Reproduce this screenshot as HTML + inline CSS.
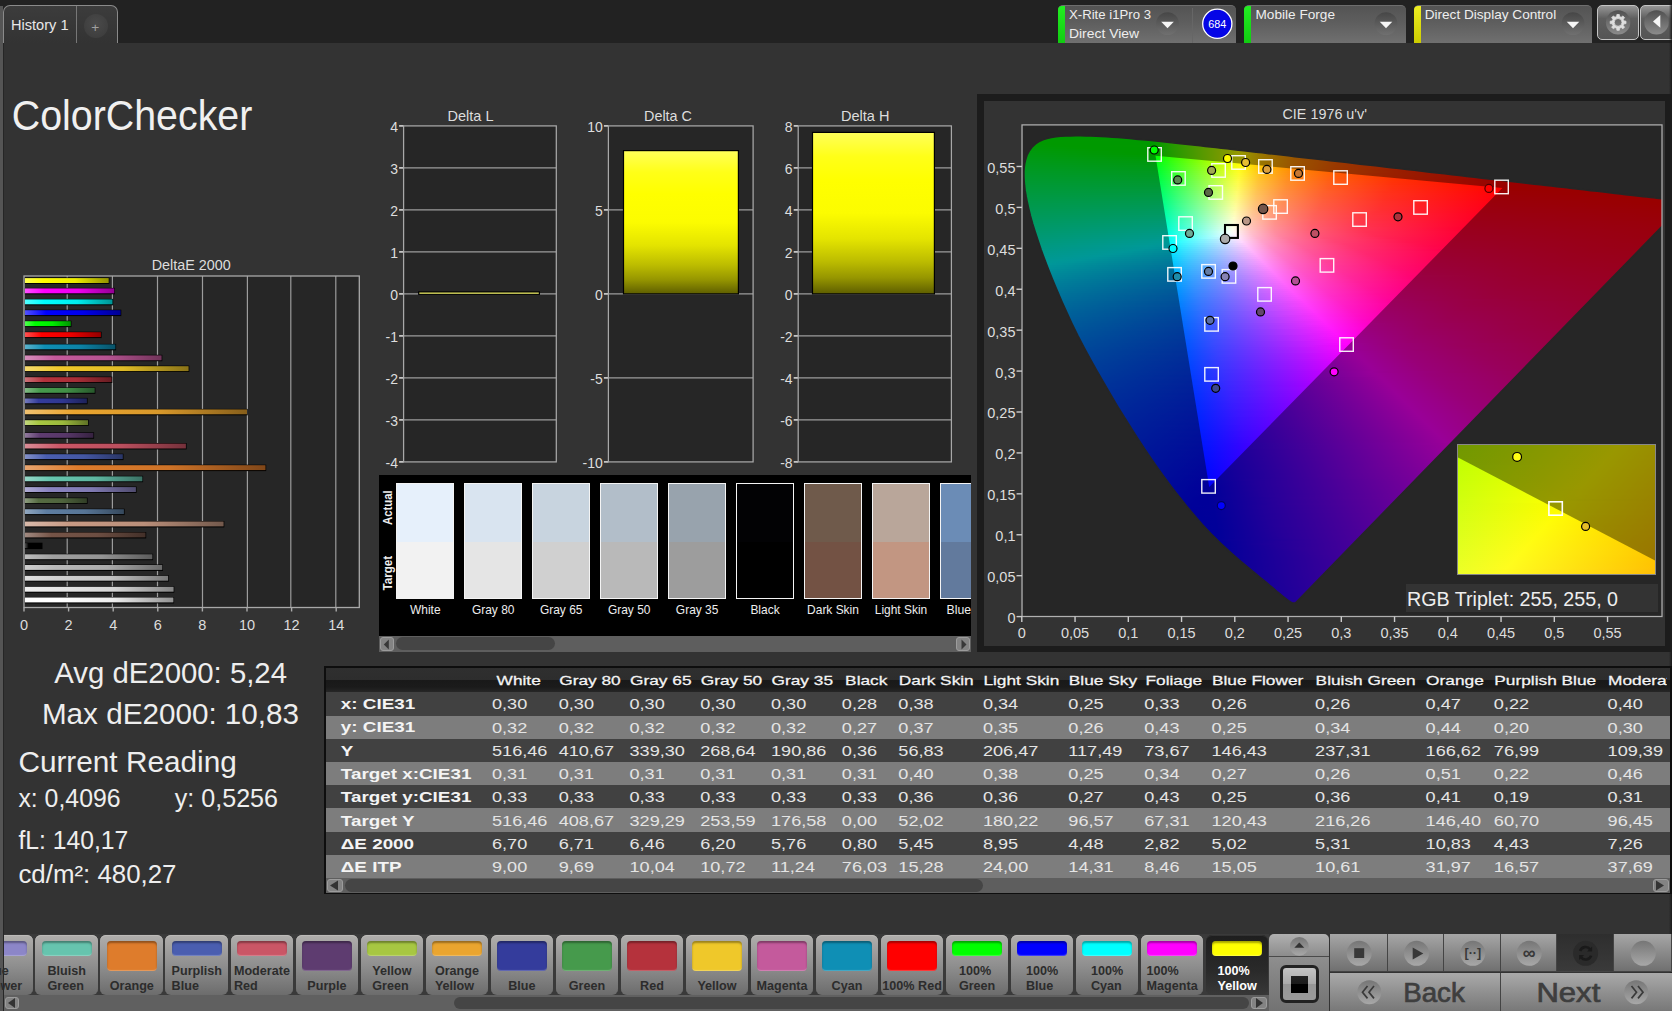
<!DOCTYPE html>
<html><head><meta charset="utf-8"><title>ColorChecker</title>
<style>
html,body{margin:0;padding:0}
body{width:1672px;height:1011px;overflow:hidden;background:#333;position:relative;font-family:'Liberation Sans',sans-serif}
div,i{position:absolute;display:block;box-sizing:border-box}
#ov{position:absolute;left:0;top:0;font-family:'Liberation Sans',sans-serif}
#cie{left:1023px;top:125px;width:639px;height:491px;background:#262626;overflow:hidden}
#loc,#ins{left:0;top:0;width:100%;height:100%}
#loc{clip-path:polygon(272.9px 477.5px,272.7px 477.5px,272.5px 477.8px,272.1px 477.8px,271.7px 478.1px,271.2px 478.1px,270.5px 478.1px,269.6px 478.1px,268.0px 477.3px,265.2px 475.4px,264.1px 474.6px,262.9px 473.7px,261.5px 472.6px,259.9px 471.3px,258.1px 469.8px,256.1px 468.2px,254.0px 466.5px,251.8px 464.5px,249.3px 462.4px,246.7px 460.3px,243.9px 457.9px,240.8px 455.3px,237.3px 452.5px,233.5px 449.4px,229.5px 446.1px,225.3px 442.6px,220.8px 438.9px,216.0px 434.8px,212.9px 432.1px,209.7px 429.3px,206.4px 426.4px,202.9px 423.2px,199.3px 419.8px,195.6px 416.3px,191.9px 412.6px,188.0px 408.7px,183.8px 404.4px,179.3px 399.5px,174.5px 394.0px,169.4px 388.1px,164.1px 381.7px,158.6px 374.8px,152.8px 367.5px,146.9px 359.7px,140.8px 351.4px,134.5px 342.6px,128.1px 333.4px,121.5px 323.8px,114.9px 313.7px,108.1px 303.0px,101.2px 292.0px,94.3px 280.8px,87.6px 269.4px,80.9px 257.9px,74.1px 246.1px,67.4px 234.2px,61.0px 222.3px,54.9px 210.6px,49.2px 199.0px,43.8px 187.4px,38.7px 176.0px,33.9px 164.8px,29.4px 154.1px,25.3px 143.9px,21.5px 133.9px,18.0px 124.3px,14.9px 115.1px,12.1px 106.5px,9.6px 98.5px,7.5px 91.0px,5.8px 83.9px,4.3px 77.3px,3.1px 71.2px,2.1px 65.4px,1.5px 60.2px,1.1px 55.3px,0.9px 50.8px,0.9px 46.5px,1.2px 42.5px,1.7px 38.9px,2.4px 35.6px,3.3px 32.5px,4.3px 29.6px,6.6px 25.4px,9.3px 21.8px,12.5px 18.9px,16.0px 16.5px,19.9px 14.7px,24.0px 13.4px,28.4px 12.4px,33.0px 11.8px,37.7px 11.3px,42.6px 11.0px,47.7px 10.9px,52.7px 10.8px,57.7px 10.8px,62.8px 10.9px,67.9px 11.0px,73.1px 11.2px,78.4px 11.5px,83.8px 11.8px,89.3px 12.1px,95.0px 12.5px,100.9px 13.0px,106.9px 13.5px,113.0px 14.1px,119.4px 14.7px,126.0px 15.3px,132.8px 16.0px,139.8px 16.7px,144.2px 17.2px,148.6px 17.7px,153.1px 18.1px,157.7px 18.6px,162.5px 19.2px,167.3px 19.7px,172.2px 20.2px,177.2px 20.8px,182.3px 21.4px,187.5px 22.0px,192.8px 22.5px,198.2px 23.2px,203.8px 23.8px,209.4px 24.4px,215.2px 25.1px,221.0px 25.7px,227.0px 26.4px,233.1px 27.1px,239.3px 27.8px,245.6px 28.6px,252.0px 29.3px,258.6px 30.0px,265.2px 30.8px,271.9px 31.6px,278.8px 32.4px,285.8px 33.2px,292.8px 34.0px,300.0px 34.8px,307.3px 35.7px,314.6px 36.5px,322.0px 37.3px,329.5px 38.2px,337.2px 39.1px,344.8px 40.0px,352.5px 40.8px,360.2px 41.7px,368.0px 42.6px,375.9px 43.5px,383.7px 44.4px,391.4px 45.3px,399.0px 46.2px,406.6px 47.1px,414.1px 47.9px,421.6px 48.8px,429.1px 49.7px,436.6px 50.5px,444.0px 51.4px,451.4px 52.2px,458.7px 53.1px,465.8px 53.9px,472.7px 54.7px,479.5px 55.4px,486.2px 56.2px,492.7px 56.9px,499.1px 57.7px,505.3px 58.4px,511.3px 59.1px,517.2px 59.7px,522.9px 60.4px,528.5px 61.0px,533.8px 61.7px,539.0px 62.3px,544.0px 62.8px,548.8px 63.4px,553.5px 63.9px,560.9px 64.8px,567.8px 65.6px,574.4px 66.3px,580.6px 67.0px,586.5px 67.7px,592.1px 68.4px,597.4px 69.0px,602.5px 69.6px,607.4px 70.1px,612.0px 70.6px,616.3px 71.1px,620.3px 71.6px,624.1px 72.0px,627.6px 72.4px,630.8px 72.8px,633.8px 73.1px,636.4px 73.4px,638.9px 73.7px,641.2px 74.0px,643.3px 74.2px,645.3px 74.5px,647.0px 74.7px,648.6px 74.8px,650.0px 75.0px,653.1px 75.4px,655.6px 75.6px,657.6px 75.9px,659.6px 76.1px,661.3px 76.3px,662.5px 76.4px,663.0px 76.5px,663.3px 76.5px)}
#loc i,#ins i{position:absolute;display:block}
</style></head>
<body>
<div style="left:0;top:0;width:1672px;height:43px;background:#222"></div>
<div style="left:0;top:6px;width:3px;height:1005px;background:#555"></div>
<div style="left:3px;top:43px;width:1px;height:968px;background:#262626"></div>
<div style="left:3px;top:5px;width:115px;height:38px;border:1px solid #8a8a8a;border-bottom:none;border-radius:7px 7px 0 0;background:linear-gradient(#3c3c3c,#333)"></div>
<div style="left:76px;top:6px;width:1px;height:37px;background:#777"></div>
<div style="left:84px;top:14px;width:24px;height:24px;border-radius:12px;background:radial-gradient(circle at 50% 40%,#4a4a4a,#3a3a3a)"></div>
<div style="left:1058px;top:5px;width:178px;height:38px;border-radius:5px 5px 0 0;background:linear-gradient(#545454,#5e5e5e 45%,#707070);border-top:1px solid #6e6e6e"></div>
<div style="left:1058px;top:6px;width:7px;height:37px;border-radius:4px 0 0 0;background:linear-gradient(#2e2,#1c1)"></div>
<div style="left:1192px;top:8px;width:1px;height:35px;background:#666"></div>
<div style="left:1244px;top:5px;width:162px;height:38px;border-radius:5px 5px 0 0;background:linear-gradient(#545454,#5e5e5e 45%,#707070);border-top:1px solid #6e6e6e"></div>
<div style="left:1244px;top:6px;width:7px;height:37px;border-radius:4px 0 0 0;background:linear-gradient(#2e2,#1c1)"></div>
<div style="left:1414px;top:5px;width:178px;height:38px;border-radius:5px 5px 0 0;background:linear-gradient(#545454,#5e5e5e 45%,#707070);border-top:1px solid #6e6e6e"></div>
<div style="left:1414px;top:6px;width:7px;height:37px;border-radius:4px 0 0 0;background:linear-gradient(#ee2,#cc0)"></div>
<div style="left:1597px;top:4.7px;width:42.3px;height:35.3px;border-radius:5px;border:1px solid #c4c4c4;background:linear-gradient(#969696,#5e5e5e 38%,#545454)"></div>
<div style="left:1640px;top:4.7px;width:42px;height:35.3px;border-radius:5px;border:1px solid #c4c4c4;background:linear-gradient(#969696,#5e5e5e 38%,#545454)"></div>
<div style="left:1669px;top:0;width:3px;height:1011px;background:linear-gradient(90deg,rgba(20,20,20,0),rgba(20,20,20,.85))"></div>
<div style="left:379px;top:475px;width:592px;height:162px;background:#000"></div>
<div style="left:396.3px;top:482.5px;width:58.0px;height:116.5px;border:1px solid #f4f4f4;background:linear-gradient(#e6f0fb 50.5%,#f2f2f2 50.5%)"></div>
<div style="left:464.2px;top:482.5px;width:58.0px;height:116.5px;border:1px solid #f4f4f4;background:linear-gradient(#d9e4f0 50.5%,#e5e5e5 50.5%)"></div>
<div style="left:532.2px;top:482.5px;width:58.0px;height:116.5px;border:1px solid #f4f4f4;background:linear-gradient(#c8d4df 50.5%,#d0d0d0 50.5%)"></div>
<div style="left:600.2px;top:482.5px;width:58.0px;height:116.5px;border:1px solid #f4f4f4;background:linear-gradient(#b2bec9 50.5%,#b9b9b9 50.5%)"></div>
<div style="left:668.1px;top:482.5px;width:58.0px;height:116.5px;border:1px solid #f4f4f4;background:linear-gradient(#98a3ad 50.5%,#9d9d9d 50.5%)"></div>
<div style="left:736.0px;top:482.5px;width:58.0px;height:116.5px;border:1px solid #f4f4f4;background:linear-gradient(#020204 50.5%,#000000 50.5%)"></div>
<div style="left:804.0px;top:482.5px;width:58.0px;height:116.5px;border:1px solid #f4f4f4;background:linear-gradient(#6f5a4b 50.5%,#735244 50.5%)"></div>
<div style="left:872.0px;top:482.5px;width:58.0px;height:116.5px;border:1px solid #f4f4f4;background:linear-gradient(#b9a69a 50.5%,#c29682 50.5%)"></div>
<div style="left:939.9px;top:482.5px;width:31.1px;height:116.5px;border:1px solid #f4f4f4;border-right:none;background:linear-gradient(#6b8cb6 50.5%,#627a9d 50.5%)"></div>
<div style="left:379px;top:636px;width:592px;height:15.6px;background:#5e5e5e"></div>
<div style="left:379.5px;top:636.5px;width:14.3px;height:14.6px;background:#838383;border:1px solid #9c9c9c;border-radius:3px"></div>
<div style="left:956px;top:636.5px;width:14.3px;height:14.6px;background:#838383;border:1px solid #9c9c9c;border-radius:3px"></div>
<div style="left:396.4px;top:637.3px;width:158.3px;height:12.8px;background:#454545;border-radius:7px"></div>
<div style="left:977px;top:94px;width:695px;height:558px;border:7px solid #1c1c1c;border-bottom-width:6px;background:#333"></div>
<div id="cie"><div id="loc">
<i style="left:29px;top:10px;width:61px;height:2px;background:linear-gradient(90deg,#00ff00 0,#00ff00 61px)"></i>
<i style="left:20px;top:12px;width:95px;height:2px;background:linear-gradient(90deg,#00ff00 0,#00ff00 95px)"></i>
<i style="left:15px;top:14px;width:120px;height:2px;background:linear-gradient(90deg,#00ff00 0,#03ff00 115px,#15ff00 120px)"></i>
<i style="left:11px;top:16px;width:143px;height:2px;background:linear-gradient(90deg,#00ff00 0,#01ff00 119px,#3cff00 138px,#4aff00 143px)"></i>
<i style="left:9px;top:18px;width:164px;height:2px;background:linear-gradient(90deg,#00ff00 0,#00ff00 121px,#39ff00 139px,#7dff00 164px)"></i>
<i style="left:7px;top:20px;width:183px;height:2px;background:linear-gradient(90deg,#00ff07 0,#00ff00 40px,#03ff00 124px,#49ff00 147px,#acff00 183px)"></i>
<i style="left:5px;top:22px;width:203px;height:2px;background:linear-gradient(90deg,#00ff0c 0,#00ff00 59px,#01ff00 126px,#3dff00 145px,#e1ff00 203px)"></i>
<i style="left:4px;top:24px;width:222px;height:2px;background:linear-gradient(90deg,#00ff11 0,#00ff00 81px,#00ff00 127px,#37ff00 144px,#f1ff00 209px,#fffd00 214px,#ffe600 222px)"></i>
<i style="left:3px;top:26px;width:240px;height:2px;background:linear-gradient(90deg,#00ff16 0,#00ff00 104px,#00ff00 128px,#47ff00 151px,#f5ff00 211px,#fffc00 215px,#ffc400 237px,#ffbe00 240px)"></i>
<i style="left:2px;top:28px;width:259px;height:2px;background:linear-gradient(90deg,#00ff1b 0,#00ff01 110px,#02ff00 130px,#3eff00 149px,#f2ff00 211px,#fffc00 216px,#ffc300 238px,#ff9e00 259px)"></i>
<i style="left:1px;top:30px;width:277px;height:2px;background:linear-gradient(90deg,#00ff1f 0,#00ff04 125px,#00ff02 131px,#35ff00 147px,#f0ff00 211px,#fffb00 217px,#ffc300 239px,#ff8e00 270px,#ff8500 277px)"></i>
<i style="left:0px;top:32px;width:295px;height:2px;background:linear-gradient(90deg,#00ff23 0,#00ff0a 132px,#46ff02 154px,#f3ff00 213px,#fffb00 218px,#ffc200 240px,#ff8e00 271px,#ff7200 295px)"></i>
<i style="left:0px;top:34px;width:313px;height:2px;background:linear-gradient(90deg,#00ff27 0,#02ff10 133px,#3fff0b 152px,#a7ff00 188px,#fffd00 217px,#ffc300 239px,#ff8e00 270px,#ff6000 313px)"></i>
<i style="left:0px;top:36px;width:330px;height:2px;background:linear-gradient(90deg,#00ff2b 0,#00ff16 133px,#36ff12 149px,#e8ff00 209px,#fffd00 217px,#ffc300 239px,#ff8e00 270px,#ff5e00 315px,#ff5200 330px)"></i>
<i style="left:0px;top:38px;width:348px;height:2px;background:linear-gradient(90deg,#00ff2f 0,#00ff1c 133px,#44ff18 154px,#f2ff05 212px,#fffc03 217px,#ffc200 239px,#ff8d00 270px,#ff5d00 315px,#ff4500 348px)"></i>
<i style="left:0px;top:40px;width:365px;height:2px;background:linear-gradient(90deg,#00ff33 0,#02ff22 134px,#41ff1e 153px,#f2ff0e 212px,#fffb0c 217px,#ffc302 238px,#ff8f00 268px,#ff5f00 312px,#ff3a00 365px)"></i>
<i style="left:0px;top:42px;width:382px;height:2px;background:linear-gradient(90deg,#00ff37 0,#00ff28 134px,#34ff25 149px,#efff17 211px,#fffb15 217px,#ffc30a 238px,#ff8e00 268px,#ff5e00 312px,#ff3100 381px,#ff3000 382px)"></i>
<i style="left:0px;top:44px;width:400px;height:2px;background:linear-gradient(90deg,#00ff3b 0,#00ff2d 134px,#45ff2a 155px,#f3ff1e 212px,#fffd1d 216px,#ffc412 237px,#ff8f06 267px,#ff6700 301px,#ff3a00 363px,#ff2700 400px)"></i>
<i style="left:0px;top:46px;width:417px;height:2px;background:linear-gradient(90deg,#00ff3f 0,#02ff33 135px,#42ff30 154px,#f4ff26 212px,#fffd24 216px,#ffc318 237px,#ff8e0c 267px,#ff5e00 311px,#ff3100 379px,#ff1f00 417px)"></i>
<i style="left:0px;top:48px;width:435px;height:2px;background:linear-gradient(90deg,#00ff43 0,#00ff38 135px,#32ff37 149px,#f1ff2d 211px,#fffc2c 216px,#ffc31e 237px,#ff8f12 266px,#ff5f05 309px,#ff3e00 353px,#ff1700 435px)"></i>
<i style="left:0px;top:50px;width:452px;height:2px;background:linear-gradient(90deg,#00ff47 0,#00ff3e 135px,#44ff3c 155px,#f2ff34 211px,#fffb33 216px,#ffc224 237px,#ff8e17 266px,#ff5e0a 309px,#ff3600 367px,#ff1000 452px)"></i>
<i style="left:0px;top:52px;width:469px;height:2px;background:linear-gradient(90deg,#00ff4b 0,#02ff43 136px,#43ff41 155px,#f2ff3b 211px,#fffb3a 216px,#ffc12a 237px,#ff8e1c 266px,#ff5d0e 309px,#ff3000 376px,#ff0900 469px)"></i>
<i style="left:0px;top:54px;width:487px;height:2px;background:linear-gradient(90deg,#00ff4e 0,#00ff48 136px,#36ff47 151px,#efff42 210px,#fffd41 215px,#ffc531 235px,#ff9122 263px,#ff6013 305px,#ff3305 370px,#ff1600 432px,#ff0000 487px)"></i>
<i style="left:0px;top:56px;width:505px;height:2px;background:linear-gradient(90deg,#00ff52 0,#00ff4e 136px,#42ff4d 155px,#f3ff49 211px,#fffd48 215px,#ffc437 235px,#ff9027 263px,#ff6017 305px,#ff3208 370px,#ff1300 439px,#ff0000 493px,#ff0000 505px)"></i>
<i style="left:0px;top:58px;width:522px;height:2px;background:linear-gradient(90deg,#00ff56 0,#02ff53 137px,#44ff52 156px,#f4ff50 211px,#fffc4f 215px,#ffc43c 235px,#ff902b 263px,#ff5f1b 305px,#ff310b 370px,#ff0b00 458px,#ff0000 492px,#ff0000 522px)"></i>
<i style="left:0px;top:60px;width:539px;height:2px;background:linear-gradient(90deg,#00ff5a 0,#01ff58 137px,#37ff58 152px,#f1ff57 210px,#fffb55 215px,#ffc342 235px,#ff8f30 263px,#ff5e1f 305px,#ff310f 370px,#ff0100 479px,#ff0000 539px)"></i>
<i style="left:0px;top:62px;width:557px;height:2px;background:linear-gradient(90deg,#00ff5e 0,#00ff5e 137px,#40ff5e 155px,#f2ff5e 210px,#fffb5c 215px,#ffc247 235px,#ff8e34 263px,#ff5d22 305px,#ff3012 370px,#ff0000 486px,#ff0000 557px)"></i>
<i style="left:0px;top:64px;width:574px;height:2px;background:linear-gradient(90deg,#00ff62 0,#03ff63 138px,#45ff63 157px,#f2ff64 210px,#fffa63 215px,#ffc14d 235px,#ff8d39 263px,#ff5e26 304px,#ff3015 369px,#ff0002 484px,#ff0000 574px)"></i>
<i style="left:0px;top:66px;width:592px;height:2px;background:linear-gradient(90deg,#00ff65 0,#01ff68 138px,#38ff69 153px,#f3ff6b 210px,#fffd6b 214px,#ffc554 233px,#ff913f 260px,#ff612b 300px,#ff3319 362px,#ff0006 480px,#ff0000 567px,#ff0000 592px)"></i>
<i style="left:0px;top:68px;width:609px;height:2px;background:linear-gradient(90deg,#00ff69 0,#00ff6e 138px,#41ff6f 156px,#f3ff72 210px,#fffc71 214px,#ffc459 233px,#ff9043 260px,#ff602f 300px,#ff331c 362px,#ff0008 479px,#ff0000 578px,#ff0000 609px)"></i>
<i style="left:0px;top:70px;width:626px;height:2px;background:linear-gradient(90deg,#00ff6d 0,#03ff73 139px,#47ff75 158px,#f4ff79 210px,#fffc78 214px,#ffc45f 233px,#ff9048 260px,#ff5f32 300px,#ff321f 362px,#ff000b 477px,#ff0000 597px,#ff0000 626px)"></i>
<i style="left:1px;top:72px;width:638px;height:2px;background:linear-gradient(90deg,#00ff71 0,#01ff79 138px,#39ff7a 153px,#f1ff80 208px,#fffb7e 213px,#ffc364 232px,#ff8f4c 259px,#ff5e36 299px,#ff3121 361px,#ff000d 475px,#ff0000 616px,#ff0000 638px)"></i>
<i style="left:1px;top:74px;width:638px;height:2px;background:linear-gradient(90deg,#00ff75 0,#00ff7e 138px,#3fff80 155px,#f1ff86 208px,#fffa85 213px,#ffc269 232px,#ff8e50 259px,#ff5e39 299px,#ff3024 361px,#ff000f 473px,#ff0000 637px,#ff0000 638px)"></i>
<i style="left:2px;top:76px;width:637px;height:2px;background:linear-gradient(90deg,#00ff79 0,#00ff84 137px,#52ff86 160px,#f6ff8e 208px,#fff98b 212px,#ffc16f 231px,#ff8d55 258px,#ff5d3c 298px,#ff3027 360px,#ff0012 470px,#ff0000 637px)"></i>
<i style="left:2px;top:78px;width:637px;height:2px;background:linear-gradient(90deg,#00ff7d 0,#01ff89 138px,#3aff8b 153px,#f3ff94 207px,#fffc94 211px,#ffc375 230px,#ff8e5a 257px,#ff5e41 296px,#ff312a 357px,#ff0014 468px,#ff0001 637px)"></i>
<i style="left:2px;top:80px;width:637px;height:2px;background:linear-gradient(90deg,#00ff80 0,#00ff8f 138px,#3dff91 154px,#f3ff9b 207px,#fffc9a 211px,#ffc27b 230px,#ff8d5e 257px,#ff5d44 296px,#ff302d 357px,#ff0016 466px,#ff0003 637px)"></i>
<i style="left:3px;top:82px;width:636px;height:2px;background:linear-gradient(90deg,#00ff84 0,#00ff94 137px,#50ff98 159px,#f8ffa3 207px,#fffba1 210px,#ffc180 229px,#ff8e63 255px,#ff5d48 294px,#ff3030 355px,#ff0019 463px,#ff0005 636px)"></i>
<i style="left:3px;top:84px;width:636px;height:2px;background:linear-gradient(90deg,#00ff88 0,#01ff9a 138px,#3bff9d 153px,#f1ffa9 205px,#fffaa7 210px,#ffc085 229px,#ff8d67 255px,#ff5d4b 294px,#ff2f32 355px,#ff001b 461px,#ff0007 636px)"></i>
<i style="left:4px;top:86px;width:635px;height:2px;background:linear-gradient(90deg,#00ff8c 0,#00ffa0 137px,#3bffa3 152px,#f1ffb0 204px,#fffdb0 208px,#ffc58e 226px,#ff8f6e 252px,#ff5f51 290px,#ff3136 349px,#ff001d 457px,#ff0008 635px)"></i>
<i style="left:4px;top:88px;width:635px;height:2px;background:linear-gradient(90deg,#00ff90 0,#00ffa5 137px,#4fffaa 158px,#f6ffb8 205px,#fffdb7 208px,#ffc493 226px,#ff9073 251px,#ff6055 288px,#ff323a 346px,#ff0020 455px,#ff000a 635px)"></i>
<i style="left:5px;top:90px;width:634px;height:2px;background:linear-gradient(90deg,#00ff94 0,#02ffab 137px,#3dffaf 152px,#f3ffbf 203px,#fffcbe 207px,#ffc399 225px,#ff8f77 250px,#ff5f59 287px,#ff323d 345px,#ff0022 452px,#ff000b 634px)"></i>
<i style="left:5px;top:92px;width:634px;height:2px;background:linear-gradient(90deg,#00ff98 0,#00ffb1 137px,#38ffb5 151px,#efffc6 202px,#ffffc7 206px,#ffc5a0 224px,#ff907d 249px,#ff5f5d 286px,#ff3240 343px,#ff0024 450px,#ff000d 634px)"></i>
<i style="left:6px;top:94px;width:633px;height:2px;background:linear-gradient(90deg,#00ff9c 0,#00ffb7 136px,#50ffbd 157px,#f8ffce 203px,#fffacb 206px,#ffc1a4 224px,#ff8e80 249px,#ff5e5f 286px,#ff3042 344px,#ff0026 448px,#ff000e 633px)"></i>
<i style="left:6px;top:96px;width:633px;height:2px;background:linear-gradient(90deg,#00ffa0 0,#02ffbd 137px,#3effc1 152px,#f1ffd4 201px,#fffdd5 205px,#ffc6ad 222px,#ff9288 246px,#ff6166 282px,#ff3447 337px,#ff0029 444px,#ff0010 633px)"></i>
<i style="left:7px;top:98px;width:632px;height:2px;background:linear-gradient(90deg,#00ffa5 0,#00ffc3 136px,#3affc7 150px,#f1ffdc 200px,#fffddc 204px,#ffc5b2 221px,#ff918c 245px,#ff6069 281px,#ff324a 337px,#ff002b 442px,#ff0011 632px)"></i>
<i style="left:8px;top:100px;width:631px;height:2px;background:linear-gradient(90deg,#00ffa9 0,#00ffc8 135px,#4fffd0 155px,#f6ffe4 200px,#fffce3 203px,#ffc4b8 220px,#ff9091 244px,#ff5f6d 280px,#ff324c 336px,#ff002d 439px,#ff0013 631px)"></i>
<i style="left:8px;top:102px;width:631px;height:2px;background:linear-gradient(90deg,#00ffad 0,#00ffce 135px,#6bffd9 163px,#ffffed 202px,#ffc6c0 219px,#ff9197 243px,#ff6172 278px,#ff3451 332px,#ff0030 434px,#ff0014 631px)"></i>
<i style="left:9px;top:104px;width:630px;height:2px;background:linear-gradient(90deg,#00ffb1 0,#00ffd3 131px,#00ffd5 135px,#37ffda 148px,#effff2 197px,#fffef4 201px,#ffc5c5 218px,#ff909b 242px,#ff6075 277px,#ff3353 331px,#ff0033 431px,#ff0016 624px,#ff0015 630px)"></i>
<i style="left:9px;top:106px;width:628px;height:2px;background:linear-gradient(90deg,#00ffb5 0,#00ffd8 129px,#00ffdb 135px,#4dffe3 154px,#f4fffa 198px,#fffaf7 202px,#ffc1c9 219px,#ff8d9e 243px,#ff5d77 279px,#ff2f54 335px,#ff0034 433px,#ff0017 624px,#ff0017 628px)"></i>
<i style="left:10px;top:108px;width:625px;height:2px;background:linear-gradient(90deg,#00ffba 0,#00ffde 126px,#02ffe1 135px,#41ffe8 150px,#f2fcff 197px,#fff5fb 202px,#ffbecc 219px,#ff89a0 244px,#ff5978 281px,#ff2c54 339px,#ff0036 430px,#ff0019 616px,#ff0018 625px)"></i>
<i style="left:11px;top:110px;width:622px;height:2px;background:linear-gradient(90deg,#00ffbe 0,#00ffe3 123px,#00ffe7 134px,#35ffed 146px,#c2fcff 184px,#fff0ff 202px,#ffb8cd 220px,#ff85a1 245px,#ff5579 283px,#ff2854 343px,#ff0039 427px,#ff001b 608px,#ff001a 622px)"></i>
<i style="left:11px;top:112px;width:620px;height:2px;background:linear-gradient(90deg,#00ffc2 0,#00ffe7 120px,#00ffee 134px,#4bfff7 152px,#9bfbff 174px,#ffe8ff 204px,#ffafcc 223px,#ff7c9f 250px,#ff4d76 290px,#ff2052 355px,#ff003b 425px,#ff001d 601px,#ff001b 620px)"></i>
<i style="left:12px;top:114px;width:617px;height:2px;background:linear-gradient(90deg,#00ffc7 0,#00ffed 117px,#02fff4 134px,#42fffc 149px,#e9e4ff 198px,#ffdcfb 206px,#ffa5c9 226px,#ff739b 255px,#ff4573 298px,#ff184e 369px,#ff003d 422px,#ff0020 593px,#ff001d 617px)"></i>
<i style="left:13px;top:116px;width:614px;height:2px;background:linear-gradient(90deg,#00ffcb 0,#00fff2 115px,#00fffb 133px,#32fdff 144px,#c6e4ff 188px,#ffd8ff 206px,#ffa2cc 226px,#ff709e 255px,#ff4274 299px,#ff154f 371px,#ff0040 419px,#ff0022 586px,#ff001e 614px)"></i>
<i style="left:13px;top:118px;width:612px;height:2px;background:linear-gradient(90deg,#00ffd0 0,#00fff7 113px,#00fdff 133px,#3bf5ff 147px,#e6d6ff 200px,#ffcdfc 209px,#ff99c9 230px,#ff689a 261px,#ff3a71 308px,#ff0e4c 385px,#ff0042 418px,#ff0024 581px,#ff0020 612px)"></i>
<i style="left:14px;top:120px;width:609px;height:2px;background:linear-gradient(90deg,#00ffd4 0,#00fffc 110px,#03f6ff 133px,#38efff 146px,#ded1ff 198px,#ffc6fc 210px,#ff92c8 232px,#ff629a 264px,#ff3570 313px,#ff084b 393px,#ff0044 416px,#ff0025 576px,#ff0021 609px)"></i>
<i style="left:15px;top:122px;width:607px;height:2px;background:linear-gradient(90deg,#00ffd9 0,#00fcff 109px,#00f0ff 132px,#2feaff 143px,#bed0ff 188px,#ffbffc 211px,#ff8dc9 233px,#ff5f9b 265px,#ff3371 314px,#ff074d 394px,#ff0046 415px,#ff0027 573px,#ff0023 607px)"></i>
<i style="left:15px;top:124px;width:605px;height:2px;background:linear-gradient(90deg,#00ffdd 0,#00fcff 97px,#00eaff 132px,#3be2ff 147px,#e8c1ff 204px,#ffb9fc 213px,#ff87c8 236px,#ff599a 269px,#ff2e70 320px,#ff004c 403px,#ff002c 549px,#ff0024 605px)"></i>
<i style="left:16px;top:126px;width:602px;height:2px;background:linear-gradient(90deg,#00ffe2 0,#00fcff 84px,#03e4ff 132px,#39ddff 146px,#e0bcff 202px,#ffb3fc 214px,#ff82c9 237px,#ff559a 271px,#ff2a71 323px,#ff004c 406px,#ff002c 553px,#ff0026 602px)"></i>
<i style="left:17px;top:128px;width:599px;height:2px;background:linear-gradient(90deg,#00ffe7 0,#00fcff 72px,#00dfff 131px,#30d9ff 143px,#c2bdff 192px,#ffadfc 215px,#ff7cc8 239px,#ff5099 274px,#ff2670 327px,#ff004f 403px,#ff002f 546px,#ff0027 599px)"></i>
<i style="left:18px;top:130px;width:596px;height:2px;background:linear-gradient(90deg,#00ffeb 0,#00fcff 59px,#00daff 130px,#38d2ff 145px,#dcb1ff 202px,#ffa7fc 216px,#ff78c9 240px,#ff4d9b 275px,#ff2471 329px,#ff0051 400px,#ff0031 540px,#ff0029 596px)"></i>
<i style="left:18px;top:132px;width:594px;height:2px;background:linear-gradient(90deg,#00fff0 0,#00fbff 48px,#03d4ff 131px,#39cdff 146px,#e2aaff 206px,#ffa1fc 218px,#ff73c8 243px,#ff489a 279px,#ff2071 334px,#ff0054 398px,#ff0033 535px,#ff002a 594px)"></i>
<i style="left:19px;top:134px;width:591px;height:2px;background:linear-gradient(90deg,#00fff5 0,#00fbff 36px,#01d0ff 130px,#31c9ff 143px,#c5abff 196px,#ff9bfc 219px,#ff6fc9 244px,#ff459a 281px,#ff1d71 337px,#ff0057 395px,#ff0035 528px,#ff002c 591px)"></i>
<i style="left:20px;top:136px;width:588px;height:2px;background:linear-gradient(90deg,#00fffa 0,#00f8ff 30px,#00cbff 129px,#38c3ff 145px,#dda0ff 206px,#ff96fd 220px,#ff6ac8 246px,#ff4099 284px,#ff1970 342px,#ff0059 393px,#ff0037 524px,#ff002d 588px)"></i>
<i style="left:21px;top:138px;width:585px;height:2px;background:linear-gradient(90deg,#00ffff 0,#03c6ff 129px,#3abeff 145px,#e39aff 209px,#ff91fd 221px,#ff66c9 247px,#ff3e9b 285px,#ff1771 343px,#ff005c 390px,#ff003a 518px,#ff002f 585px)"></i>
<i style="left:21px;top:140px;width:583px;height:2px;background:linear-gradient(90deg,#00faff 0,#01c2ff 129px,#32bbff 143px,#c89bff 200px,#ff8cfd 223px,#ff61c8 250px,#ff399a 289px,#ff1270 349px,#ff005e 388px,#ff003c 513px,#ff0030 583px)"></i>
<i style="left:22px;top:142px;width:580px;height:2px;background:linear-gradient(90deg,#00f6ff 0,#00beff 128px,#36b6ff 144px,#d593ff 206px,#ff87fd 224px,#ff5dc9 251px,#ff379b 290px,#ff1071 350px,#ff0061 385px,#ff003f 507px,#ff0032 580px)"></i>
<i style="left:23px;top:144px;width:577px;height:2px;background:linear-gradient(90deg,#00f1ff 0,#03b9ff 128px,#3ab1ff 145px,#e48bff 213px,#ff82fd 225px,#ff59c8 253px,#ff339a 293px,#ff0c70 355px,#ff0064 382px,#ff0041 501px,#ff0033 577px)"></i>
<i style="left:24px;top:146px;width:574px;height:2px;background:linear-gradient(90deg,#00ecff 0,#01b5ff 127px,#33aeff 142px,#cb8cff 203px,#ff7dfd 226px,#ff55c9 254px,#ff309a 295px,#ff0971 358px,#ff0066 380px,#ff0043 497px,#ff0035 574px)"></i>
<i style="left:24px;top:148px;width:572px;height:2px;background:linear-gradient(90deg,#00e8ff 0,#00b1ff 127px,#34aaff 143px,#ce87ff 206px,#ff79fd 228px,#ff52ca 256px,#ff2d9c 297px,#ff0772 360px,#ff0069 379px,#ff0045 494px,#ff0037 572px)"></i>
<i style="left:25px;top:150px;width:569px;height:2px;background:linear-gradient(90deg,#00e4ff 0,#03adff 127px,#3aa4ff 145px,#e37dff 216px,#ff74fd 229px,#ff4ec9 258px,#ff299b 300px,#ff0371 364px,#ff004d 468px,#ff0038 569px)"></i>
<i style="left:26px;top:152px;width:566px;height:2px;background:linear-gradient(90deg,#00e0ff 0,#01aaff 126px,#33a2ff 142px,#cd7fff 207px,#ff70fd 230px,#ff4bca 259px,#ff269b 302px,#ff0071 367px,#ff004d 473px,#ff003a 566px)"></i>
<i style="left:27px;top:154px;width:563px;height:2px;background:linear-gradient(90deg,#00dbff 0,#00a6ff 125px,#349eff 142px,#d07aff 209px,#ff6cfd 231px,#ff47c9 261px,#ff239a 305px,#ff0073 367px,#ff004e 472px,#ff003b 563px)"></i>
<i style="left:28px;top:156px;width:560px;height:2px;background:linear-gradient(90deg,#00d7ff 0,#03a2ff 125px,#3a99ff 144px,#e570ff 219px,#ff68fd 232px,#ff44ca 262px,#ff209b 306px,#ff0076 364px,#ff0051 467px,#ff003d 560px)"></i>
<i style="left:29px;top:158px;width:557px;height:2px;background:linear-gradient(90deg,#00d3ff 0,#019fff 124px,#3497ff 141px,#cd73ff 209px,#ff64fd 233px,#ff40c9 264px,#ff1d9b 309px,#ff0079 361px,#ff0053 462px,#ff003e 557px)"></i>
<i style="left:29px;top:160px;width:556px;height:2px;background:linear-gradient(90deg,#00d0ff 0,#009cff 124px,#3294ff 141px,#ca70ff 209px,#ff60fd 235px,#ff3dca 266px,#ff1a9b 312px,#ff007c 359px,#ff0056 457px,#ff0040 556px)"></i>
<i style="left:30px;top:162px;width:553px;height:2px;background:linear-gradient(90deg,#00ccff 0,#0398ff 124px,#3b8fff 144px,#e665ff 223px,#ff5cfd 236px,#ff39c9 268px,#ff169a 315px,#ff007f 356px,#ff0059 452px,#ff0041 553px)"></i>
<i style="left:31px;top:164px;width:550px;height:2px;background:linear-gradient(90deg,#00c9ff 0,#0195ff 123px,#348dff 141px,#d067ff 213px,#ff58fd 237px,#ff36ca 269px,#ff149b 316px,#ff0083 353px,#ff005c 447px,#ff0043 550px)"></i>
<i style="left:32px;top:166px;width:547px;height:2px;background:linear-gradient(90deg,#00c5ff 0,#0093ff 122px,#308bff 139px,#c467ff 208px,#ff55fd 238px,#ff33c9 271px,#ff119b 319px,#ff0086 350px,#ff005f 442px,#ff0045 547px)"></i>
<i style="left:33px;top:168px;width:544px;height:2px;background:linear-gradient(90deg,#00c1ff 0,#038fff 122px,#3b85ff 143px,#e759ff 226px,#ff51fd 239px,#ff30ca 272px,#ff0e9b 320px,#ff0089 347px,#ff0061 437px,#ff0046 544px)"></i>
<i style="left:34px;top:170px;width:541px;height:2px;background:linear-gradient(90deg,#00beff 0,#018cff 121px,#3584ff 140px,#d25cff 216px,#ff4efe 240px,#ff2cc9 274px,#ff0b9b 323px,#ff008c 345px,#ff0064 433px,#ff0048 541px)"></i>
<i style="left:34px;top:172px;width:539px;height:2px;background:linear-gradient(90deg,#00bbff 0,#008aff 121px,#3181ff 139px,#c75cff 212px,#ff4afe 242px,#ff2aca 276px,#ff089b 326px,#ff008f 344px,#ff0066 431px,#ff004a 539px)"></i>
<i style="left:35px;top:174px;width:536px;height:2px;background:linear-gradient(90deg,#00b8ff 0,#0387ff 121px,#3b7cff 143px,#e84fff 230px,#ff46fc 244px,#ff26c8 279px,#ff039a 330px,#ff0082 370px,#ff005b 472px,#ff004b 536px)"></i>
<i style="left:36px;top:176px;width:533px;height:2px;background:linear-gradient(90deg,#00b4ff 0,#0184ff 120px,#357bff 140px,#d352ff 220px,#ff42fc 245px,#ff22c8 281px,#ff0099 333px,#ff0070 413px,#ff004d 533px)"></i>
<i style="left:37px;top:178px;width:530px;height:2px;background:linear-gradient(90deg,#00b1ff 0,#0081ff 119px,#3079ff 137px,#c154ff 211px,#ff3ffc 246px,#ff20c8 282px,#ff009b 333px,#ff0071 413px,#ff004f 530px)"></i>
<i style="left:38px;top:180px;width:527px;height:2px;background:linear-gradient(90deg,#00aeff 0,#037fff 119px,#3b74ff 142px,#e945ff 233px,#ff3cfc 247px,#ff1cc8 284px,#ff009e 330px,#ff0074 408px,#ff0050 527px)"></i>
<i style="left:39px;top:182px;width:524px;height:2px;background:linear-gradient(90deg,#00abff 0,#017cff 118px,#3673ff 139px,#d548ff 223px,#ff39fc 248px,#ff1ac8 285px,#ff00a2 327px,#ff0078 403px,#ff0052 524px)"></i>
<i style="left:40px;top:184px;width:521px;height:2px;background:linear-gradient(90deg,#00a8ff 0,#007aff 117px,#2e72ff 135px,#bd4dff 210px,#ff36fc 249px,#ff17c9 286px,#ff00a6 324px,#ff007b 398px,#ff0055 516px,#ff0054 521px)"></i>
<i style="left:41px;top:186px;width:518px;height:2px;background:linear-gradient(90deg,#00a5ff 0,#0377ff 117px,#3b6cff 141px,#e93bff 236px,#ff33fc 250px,#ff14c8 288px,#ff00aa 321px,#ff007f 393px,#ff0058 508px,#ff0056 518px)"></i>
<i style="left:42px;top:188px;width:515px;height:2px;background:linear-gradient(90deg,#00a2ff 0,#0175ff 116px,#366bff 138px,#d73fff 226px,#ff2ffc 251px,#ff12c9 289px,#ff00ae 318px,#ff0082 389px,#ff005b 501px,#ff0057 515px)"></i>
<i style="left:43px;top:190px;width:512px;height:2px;background:linear-gradient(90deg,#00a0ff 0,#0073ff 115px,#2f6aff 134px,#bf43ff 213px,#ff2cfc 252px,#ff0ec8 291px,#ff00b1 316px,#ff0085 386px,#ff005d 496px,#ff0059 512px)"></i>
<i style="left:43px;top:192px;width:510px;height:2px;background:linear-gradient(90deg,#009dff 0,#0370ff 116px,#3c65ff 141px,#ea32ff 240px,#ff2afc 254px,#ff0cc9 293px,#ff00b5 314px,#ff0088 382px,#ff0061 488px,#ff005b 510px)"></i>
<i style="left:44px;top:194px;width:507px;height:2px;background:linear-gradient(90deg,#009bff 0,#026eff 115px,#3664ff 138px,#d836ff 230px,#ff27fc 255px,#ff08c8 295px,#ff00b8 312px,#ff008b 379px,#ff0063 483px,#ff005d 507px)"></i>
<i style="left:45px;top:196px;width:504px;height:2px;background:linear-gradient(90deg,#0098ff 0,#006cff 114px,#2d64ff 133px,#bb3dff 213px,#ff24fc 256px,#ff06c9 296px,#ff00bc 310px,#ff008e 376px,#ff0066 478px,#ff005f 504px)"></i>
<i style="left:46px;top:198px;width:502px;height:2px;background:linear-gradient(90deg,#0095ff 0,#0369ff 114px,#3c5eff 140px,#eb2aff 243px,#ff21fc 257px,#ff02c9 298px,#ff009a 358px,#ff0070 450px,#ff0060 502px)"></i>
<i style="left:47px;top:200px;width:499px;height:2px;background:linear-gradient(90deg,#0093ff 0,#0268ff 113px,#375dff 137px,#d92dff 233px,#ff1efd 258px,#ff00c9 299px,#ff009a 359px,#ff0071 451px,#ff0062 499px)"></i>
<i style="left:48px;top:202px;width:496px;height:2px;background:linear-gradient(90deg,#0090ff 0,#0066ff 112px,#2e5dff 132px,#bb35ff 215px,#ff1bfd 259px,#ff00cc 298px,#ff009c 358px,#ff0072 449px,#ff0064 496px)"></i>
<i style="left:49px;top:204px;width:493px;height:2px;background:linear-gradient(90deg,#008eff 0,#0363ff 112px,#3c58ff 139px,#eb21ff 246px,#ff18fd 260px,#ff00d0 295px,#ff00a1 353px,#ff0076 441px,#ff0066 493px)"></i>
<i style="left:50px;top:206px;width:490px;height:2px;background:linear-gradient(90deg,#008bff 0,#0261ff 111px,#3757ff 136px,#db25ff 236px,#ff15fd 261px,#ff00d5 292px,#ff00a5 349px,#ff007a 435px,#ff0068 490px)"></i>
<i style="left:51px;top:208px;width:487px;height:2px;background:linear-gradient(90deg,#0089ff 0,#0060ff 110px,#3056ff 132px,#c42bff 222px,#ff13fd 262px,#ff00da 289px,#ff00a9 344px,#ff007e 427px,#ff006a 487px)"></i>
<i style="left:52px;top:210px;width:484px;height:2px;background:linear-gradient(90deg,#0087ff 0,#035dff 110px,#3c52ff 138px,#ec19ff 249px,#ff10fd 263px,#ff00df 286px,#ff00ae 340px,#ff0082 421px,#ff006b 484px)"></i>
<i style="left:53px;top:212px;width:481px;height:2px;background:linear-gradient(90deg,#0084ff 0,#025cff 109px,#3751ff 135px,#da1eff 238px,#ff0dfd 264px,#ff00e4 283px,#ff00b2 336px,#ff0085 415px,#ff006d 481px)"></i>
<i style="left:54px;top:214px;width:478px;height:2px;background:linear-gradient(90deg,#0082ff 0,#005aff 108px,#3150ff 131px,#c623ff 225px,#ff0afd 265px,#ff00e9 280px,#ff00b7 331px,#ff008a 407px,#ff006f 478px)"></i>
<i style="left:55px;top:216px;width:475px;height:2px;background:linear-gradient(90deg,#0080ff 0,#0358ff 108px,#3c4cff 137px,#ed11ff 252px,#ff06fb 267px,#ff00eb 279px,#ff00b9 330px,#ff008c 405px,#ff0071 475px)"></i>
<i style="left:56px;top:218px;width:472px;height:2px;background:linear-gradient(90deg,#007eff 0,#0256ff 107px,#384bff 134px,#db16ff 241px,#ff03fd 267px,#ff00cb 310px,#ff009d 375px,#ff0073 472px)"></i>
<i style="left:57px;top:220px;width:469px;height:2px;background:linear-gradient(90deg,#007cff 0,#0155ff 106px,#314bff 130px,#c71bff 228px,#ff00fd 268px,#ff00c9 314px,#ff009a 381px,#ff0075 469px)"></i>
<i style="left:58px;top:222px;width:466px;height:2px;background:linear-gradient(90deg,#0079ff 0,#0353ff 106px,#3c46ff 136px,#e30dff 248px,#ff00fe 268px,#ff00ca 314px,#ff009c 381px,#ff0077 466px)"></i>
<i style="left:59px;top:224px;width:463px;height:2px;background:linear-gradient(90deg,#0077ff 0,#0251ff 105px,#3845ff 133px,#dc0eff 244px,#fb00ff 266px,#ff00ed 282px,#ff00bb 334px,#ff008e 411px,#ff0079 463px)"></i>
<i style="left:60px;top:226px;width:460px;height:2px;background:linear-gradient(90deg,#0075ff 0,#014fff 104px,#3245ff 129px,#c914ff 231px,#f600ff 263px,#ff00fa 273px,#ff00c7 321px,#ff0098 392px,#ff007b 460px)"></i>
<i style="left:62px;top:228px;width:456px;height:2px;background:linear-gradient(90deg,#0073ff 0,#034eff 103px,#3c41ff 134px,#d90aff 242px,#f000ff 259px,#ff00fc 272px,#ff00c8 320px,#ff0099 391px,#ff007e 456px)"></i>
<i style="left:63px;top:230px;width:453px;height:2px;background:linear-gradient(90deg,#0071ff 0,#024cff 102px,#3840ff 131px,#d40aff 239px,#eb00ff 256px,#ff00fc 273px,#ff00c8 322px,#ff0099 394px,#ff0080 453px)"></i>
<i style="left:64px;top:232px;width:450px;height:2px;background:linear-gradient(90deg,#006fff 0,#014bff 101px,#3240ff 127px,#c90dff 232px,#e600ff 253px,#ff00fc 274px,#ff00c8 323px,#ff009a 395px,#ff0082 450px)"></i>
<i style="left:65px;top:234px;width:447px;height:2px;background:linear-gradient(90deg,#006dff 0,#0349ff 101px,#3b3cff 132px,#ce08ff 236px,#e200ff 251px,#ff00fc 275px,#ff00c8 325px,#ff0099 398px,#ff0084 447px)"></i>
<i style="left:66px;top:236px;width:445px;height:2px;background:linear-gradient(90deg,#006bff 0,#0247ff 100px,#383bff 130px,#ca07ff 234px,#de00ff 249px,#ff00fc 276px,#ff00c8 326px,#ff009a 399px,#ff0086 445px)"></i>
<i style="left:67px;top:238px;width:442px;height:2px;background:linear-gradient(90deg,#0069ff 0,#0146ff 99px,#333bff 126px,#c507ff 231px,#d900ff 246px,#ff00fc 277px,#ff00c8 328px,#ff0099 402px,#ff0088 442px)"></i>
<i style="left:68px;top:240px;width:439px;height:2px;background:linear-gradient(90deg,#0067ff 0,#0344ff 99px,#3b37ff 131px,#c306ff 230px,#d700ff 245px,#ff00fc 278px,#ff00c8 329px,#ff009a 404px,#ff008a 439px)"></i>
<i style="left:69px;top:242px;width:436px;height:2px;background:linear-gradient(90deg,#0066ff 0,#0243ff 98px,#3737ff 128px,#bf06ff 227px,#d200ff 242px,#ff00fc 279px,#ff00c8 331px,#ff0099 407px,#ff008c 436px)"></i>
<i style="left:70px;top:244px;width:433px;height:2px;background:linear-gradient(90deg,#0064ff 0,#0142ff 97px,#3336ff 125px,#bb05ff 225px,#d000ff 241px,#ff00fc 280px,#ff00c8 332px,#ff009a 408px,#ff008f 433px)"></i>
<i style="left:72px;top:246px;width:429px;height:2px;background:linear-gradient(90deg,#0062ff 0,#0340ff 96px,#3b33ff 129px,#b903ff 223px,#fc00ff 275px,#ff00e9 297px,#ff00b7 357px,#ff0091 429px)"></i>
<i style="left:73px;top:248px;width:426px;height:2px;background:linear-gradient(90deg,#0060ff 0,#023fff 95px,#3732ff 126px,#b503ff 220px,#f700ff 272px,#ff00fb 282px,#ff00c7 336px,#ff0098 415px,#ff0093 426px)"></i>
<i style="left:74px;top:250px;width:423px;height:2px;background:linear-gradient(90deg,#005eff 0,#013dff 94px,#3332ff 123px,#b103ff 217px,#f200ff 269px,#ff00fb 283px,#ff00c7 337px,#ff0099 416px,#ff0096 423px)"></i>
<i style="left:75px;top:252px;width:420px;height:2px;background:linear-gradient(90deg,#005cff 0,#033cff 94px,#3b2eff 128px,#af02ff 216px,#ff00fc 283px,#ff00c9 337px,#ff009a 416px,#ff0098 420px)"></i>
<i style="left:76px;top:254px;width:417px;height:2px;background:linear-gradient(90deg,#005bff 0,#023aff 93px,#382eff 125px,#ab02ff 213px,#ff00fc 284px,#ff00c8 339px,#ff009a 417px)"></i>
<i style="left:77px;top:256px;width:414px;height:2px;background:linear-gradient(90deg,#0059ff 0,#0139ff 92px,#342dff 122px,#a602ff 210px,#ff00fc 285px,#ff00c9 340px,#ff009d 414px)"></i>
<i style="left:78px;top:258px;width:411px;height:2px;background:linear-gradient(90deg,#0057ff 0,#0338ff 92px,#3b2aff 127px,#a301ff 208px,#ff00fc 286px,#ff00c8 342px,#ff009f 411px)"></i>
<i style="left:80px;top:260px;width:407px;height:2px;background:linear-gradient(90deg,#0056ff 0,#0236ff 90px,#3829ff 123px,#9f01ff 204px,#ff00fc 286px,#ff00c9 342px,#ff00a2 407px)"></i>
<i style="left:81px;top:262px;width:404px;height:2px;background:linear-gradient(90deg,#0054ff 0,#0135ff 89px,#3429ff 120px,#a400ff 208px,#ff00fc 287px,#ff00c8 344px,#ff00a4 404px)"></i>
<i style="left:82px;top:264px;width:401px;height:2px;background:linear-gradient(90deg,#0052ff 0,#0334ff 89px,#3c26ff 125px,#a000ff 205px,#ff00fd 288px,#ff00c9 345px,#ff00a7 401px)"></i>
<i style="left:83px;top:266px;width:398px;height:2px;background:linear-gradient(90deg,#0051ff 0,#0233ff 88px,#3825ff 122px,#9c00ff 202px,#ff00fd 289px,#ff00c8 347px,#ff00a9 398px)"></i>
<i style="left:84px;top:268px;width:395px;height:2px;background:linear-gradient(90deg,#004fff 0,#0131ff 87px,#3425ff 119px,#9800ff 199px,#ff00fd 290px,#ff00c9 348px,#ff00ac 395px)"></i>
<i style="left:85px;top:270px;width:392px;height:2px;background:linear-gradient(90deg,#004eff 0,#0330ff 87px,#3c22ff 124px,#9400ff 196px,#ff00fd 291px,#ff00c9 349px,#ff00ae 392px)"></i>
<i style="left:87px;top:272px;width:388px;height:2px;background:linear-gradient(90deg,#004cff 0,#022fff 85px,#3821ff 120px,#9000ff 192px,#ff00fd 291px,#ff00c9 350px,#ff00b1 388px)"></i>
<i style="left:88px;top:274px;width:386px;height:2px;background:linear-gradient(90deg,#004aff 0,#012eff 84px,#3521ff 117px,#8d00ff 189px,#ff00fd 292px,#ff00c9 351px,#ff00b3 386px)"></i>
<i style="left:89px;top:276px;width:383px;height:2px;background:linear-gradient(90deg,#0049ff 0,#032cff 84px,#3c1eff 122px,#8900ff 186px,#ff00fd 293px,#ff00c9 353px,#ff00b6 383px)"></i>
<i style="left:90px;top:278px;width:380px;height:2px;background:linear-gradient(90deg,#0047ff 0,#022bff 83px,#381dff 119px,#8500ff 183px,#ff00fd 294px,#ff00c9 354px,#ff00b9 380px)"></i>
<i style="left:91px;top:280px;width:377px;height:2px;background:linear-gradient(90deg,#0046ff 0,#012aff 82px,#351dff 116px,#8300ff 181px,#ff00fd 295px,#ff00c9 356px,#ff00bb 377px)"></i>
<i style="left:93px;top:282px;width:373px;height:2px;background:linear-gradient(90deg,#0044ff 0,#0329ff 81px,#3c1aff 120px,#7f00ff 177px,#ff00fd 295px,#ff00c9 356px,#ff00be 373px)"></i>
<i style="left:94px;top:284px;width:370px;height:2px;background:linear-gradient(90deg,#0043ff 0,#0228ff 80px,#3919ff 117px,#7c00ff 174px,#ff00fd 296px,#ff00c9 358px,#ff00c1 370px)"></i>
<i style="left:95px;top:286px;width:367px;height:2px;background:linear-gradient(90deg,#0042ff 0,#0127ff 79px,#3519ff 114px,#7800ff 171px,#ff00fd 297px,#ff00c9 359px,#ff00c4 367px)"></i>
<i style="left:96px;top:288px;width:364px;height:2px;background:linear-gradient(90deg,#0040ff 0,#0325ff 79px,#3c16ff 119px,#7500ff 168px,#ff00fd 298px,#ff00c9 361px,#ff00c7 364px)"></i>
<i style="left:97px;top:290px;width:361px;height:2px;background:linear-gradient(90deg,#003fff 0,#0224ff 78px,#3916ff 116px,#7200ff 165px,#ff00fd 299px,#ff00ca 361px)"></i>
<i style="left:99px;top:292px;width:357px;height:2px;background:linear-gradient(90deg,#003dff 0,#0124ff 76px,#3515ff 112px,#6e00ff 161px,#ff00fd 299px,#ff00cd 357px)"></i>
<i style="left:100px;top:294px;width:354px;height:2px;background:linear-gradient(90deg,#003cff 0,#0322ff 76px,#3c12ff 117px,#6b00ff 158px,#ff00fd 300px,#ff00d0 354px)"></i>
<i style="left:101px;top:296px;width:351px;height:2px;background:linear-gradient(90deg,#003aff 0,#0221ff 75px,#3912ff 114px,#6900ff 156px,#ff00fd 301px,#ff00d3 351px)"></i>
<i style="left:102px;top:298px;width:348px;height:2px;background:linear-gradient(90deg,#0039ff 0,#0120ff 74px,#3612ff 111px,#6600ff 153px,#ff00fd 302px,#ff00d6 348px)"></i>
<i style="left:104px;top:300px;width:344px;height:2px;background:linear-gradient(90deg,#0038ff 0,#031fff 73px,#3c0eff 115px,#6300ff 149px,#ff00fd 302px,#ff00d9 344px)"></i>
<i style="left:105px;top:302px;width:341px;height:2px;background:linear-gradient(90deg,#0036ff 0,#021eff 72px,#390eff 112px,#5f00ff 146px,#ff00fd 303px,#ff00dc 341px)"></i>
<i style="left:106px;top:304px;width:338px;height:2px;background:linear-gradient(90deg,#0035ff 0,#011dff 71px,#360eff 109px,#5c00ff 143px,#ff00fd 304px,#ff00e0 338px)"></i>
<i style="left:107px;top:306px;width:335px;height:2px;background:linear-gradient(90deg,#0034ff 0,#031cff 71px,#3c0aff 114px,#5900ff 140px,#ff00fd 305px,#ff00e3 335px)"></i>
<i style="left:109px;top:308px;width:331px;height:2px;background:linear-gradient(90deg,#0032ff 0,#021bff 69px,#390aff 110px,#5600ff 136px,#ff00fd 305px,#ff00e6 331px)"></i>
<i style="left:110px;top:310px;width:329px;height:2px;background:linear-gradient(90deg,#0031ff 0,#011aff 68px,#360aff 107px,#5300ff 133px,#ff00fd 306px,#ff00e9 329px)"></i>
<i style="left:111px;top:312px;width:326px;height:2px;background:linear-gradient(90deg,#0030ff 0,#0319ff 68px,#3c06ff 112px,#5200ff 132px,#ff00fd 307px,#ff00ec 326px)"></i>
<i style="left:113px;top:314px;width:322px;height:2px;background:linear-gradient(90deg,#002eff 0,#0218ff 66px,#3906ff 108px,#4f00ff 128px,#ff00fd 307px,#ff00f0 322px)"></i>
<i style="left:114px;top:316px;width:319px;height:2px;background:linear-gradient(90deg,#002dff 0,#0117ff 65px,#3606ff 105px,#4c00ff 125px,#ff00fe 307px,#ff00f3 319px)"></i>
<i style="left:115px;top:318px;width:316px;height:2px;background:linear-gradient(90deg,#002cff 0,#0316ff 65px,#3c02ff 110px,#ee00ff 289px,#ff00fb 311px,#ff00f7 316px)"></i>
<i style="left:117px;top:320px;width:312px;height:2px;background:linear-gradient(90deg,#002aff 0,#0215ff 63px,#3902ff 106px,#e200ff 277px,#ff00fc 310px,#ff00fb 312px)"></i>
<i style="left:118px;top:322px;width:309px;height:2px;background:linear-gradient(90deg,#0029ff 0,#0114ff 62px,#3702ff 103px,#d800ff 267px,#ff00fe 309px)"></i>
<i style="left:119px;top:324px;width:306px;height:2px;background:linear-gradient(90deg,#0028ff 0,#0313ff 62px,#3c00ff 108px,#ee00ff 291px,#fc00ff 306px)"></i>
<i style="left:121px;top:326px;width:302px;height:2px;background:linear-gradient(90deg,#0026ff 0,#0212ff 60px,#3a00ff 104px,#e300ff 279px,#f800ff 302px)"></i>
<i style="left:122px;top:328px;width:299px;height:2px;background:linear-gradient(90deg,#0025ff 0,#0211ff 59px,#3700ff 101px,#d900ff 269px,#f500ff 299px)"></i>
<i style="left:123px;top:330px;width:296px;height:2px;background:linear-gradient(90deg,#0024ff 0,#0310ff 59px,#3700ff 101px,#da00ff 271px,#f100ff 296px)"></i>
<i style="left:125px;top:332px;width:292px;height:2px;background:linear-gradient(90deg,#0023ff 0,#020fff 57px,#3400ff 97px,#d000ff 260px,#ee00ff 292px)"></i>
<i style="left:126px;top:334px;width:289px;height:2px;background:linear-gradient(90deg,#0021ff 0,#020eff 56px,#3200ff 94px,#c800ff 251px,#ea00ff 289px)"></i>
<i style="left:127px;top:336px;width:286px;height:2px;background:linear-gradient(90deg,#0020ff 0,#030dff 56px,#2f00ff 91px,#bf00ff 242px,#e700ff 286px)"></i>
<i style="left:129px;top:338px;width:282px;height:2px;background:linear-gradient(90deg,#001fff 0,#020cff 54px,#2d00ff 88px,#b900ff 235px,#e300ff 282px)"></i>
<i style="left:130px;top:340px;width:279px;height:2px;background:linear-gradient(90deg,#001eff 0,#020bff 53px,#2a00ff 85px,#b200ff 227px,#e000ff 279px)"></i>
<i style="left:132px;top:342px;width:275px;height:2px;background:linear-gradient(90deg,#001cff 0,#030aff 52px,#2800ff 81px,#a900ff 217px,#dc00ff 275px)"></i>
<i style="left:133px;top:344px;width:272px;height:2px;background:linear-gradient(90deg,#001bff 0,#0209ff 51px,#2600ff 79px,#a400ff 212px,#d900ff 272px)"></i>
<i style="left:134px;top:346px;width:269px;height:2px;background:linear-gradient(90deg,#001aff 0,#0208ff 50px,#2300ff 76px,#9c00ff 203px,#d600ff 269px)"></i>
<i style="left:136px;top:348px;width:266px;height:2px;background:linear-gradient(90deg,#0019ff 0,#0307ff 49px,#2100ff 73px,#9700ff 197px,#d400ff 266px)"></i>
<i style="left:137px;top:350px;width:263px;height:2px;background:linear-gradient(90deg,#0018ff 0,#0206ff 48px,#2000ff 71px,#9300ff 192px,#d000ff 263px)"></i>
<i style="left:139px;top:352px;width:259px;height:2px;background:linear-gradient(90deg,#0016ff 0,#0205ff 46px,#2000ff 70px,#9400ff 193px,#cd00ff 259px)"></i>
<i style="left:140px;top:354px;width:256px;height:2px;background:linear-gradient(90deg,#0015ff 0,#0304ff 46px,#2d00ff 81px,#b800ff 235px,#ca00ff 256px)"></i>
<i style="left:142px;top:356px;width:252px;height:2px;background:linear-gradient(90deg,#0014ff 0,#0203ff 44px,#3a00ff 93px,#c700ff 252px)"></i>
<i style="left:143px;top:358px;width:249px;height:2px;background:linear-gradient(90deg,#0013ff 0,#0202ff 43px,#3800ff 90px,#c400ff 249px)"></i>
<i style="left:145px;top:360px;width:245px;height:2px;background:linear-gradient(90deg,#0011ff 0,#0300ff 42px,#3c00ff 93px,#c100ff 245px)"></i>
<i style="left:146px;top:362px;width:242px;height:2px;background:linear-gradient(90deg,#0010ff 0,#0200ff 41px,#3a00ff 91px,#be00ff 242px)"></i>
<i style="left:148px;top:364px;width:238px;height:2px;background:linear-gradient(90deg,#000fff 0,#0200ff 39px,#3800ff 87px,#bb00ff 238px)"></i>
<i style="left:149px;top:366px;width:235px;height:2px;background:linear-gradient(90deg,#000dff 0,#0300ff 39px,#3c00ff 91px,#b800ff 235px)"></i>
<i style="left:151px;top:368px;width:231px;height:2px;background:linear-gradient(90deg,#000cff 0,#0200ff 37px,#3a00ff 88px,#b500ff 231px)"></i>
<i style="left:152px;top:370px;width:228px;height:2px;background:linear-gradient(90deg,#000bff 0,#0000ff 34px,#3d00ff 90px,#b300ff 228px)"></i>
<i style="left:154px;top:372px;width:224px;height:2px;background:linear-gradient(90deg,#0009ff 0,#0000ff 30px,#0900ff 39px,#5100ff 111px,#b000ff 224px)"></i>
<i style="left:155px;top:374px;width:221px;height:2px;background:linear-gradient(90deg,#0008ff 0,#0000ff 28px,#0400ff 35px,#4100ff 93px,#ad00ff 221px)"></i>
<i style="left:157px;top:376px;width:217px;height:2px;background:linear-gradient(90deg,#0007ff 0,#0000ff 25px,#0300ff 33px,#3e00ff 89px,#aa00ff 217px)"></i>
<i style="left:159px;top:378px;width:213px;height:2px;background:linear-gradient(90deg,#0005ff 0,#0000ff 25px,#0600ff 33px,#4800ff 98px,#a800ff 213px)"></i>
<i style="left:160px;top:380px;width:210px;height:2px;background:linear-gradient(90deg,#0004ff 0,#0200ff 30px,#3a00ff 82px,#a500ff 210px)"></i>
<i style="left:162px;top:382px;width:206px;height:2px;background:linear-gradient(90deg,#0002ff 0,#0200ff 28px,#3700ff 78px,#a200ff 206px)"></i>
<i style="left:164px;top:384px;width:202px;height:2px;background:linear-gradient(90deg,#0000ff 0,#0300ff 27px,#3c00ff 82px,#a000ff 202px)"></i>
<i style="left:165px;top:386px;width:200px;height:2px;background:linear-gradient(90deg,#0000ff 0,#0200ff 26px,#3a00ff 79px,#9e00ff 200px)"></i>
<i style="left:167px;top:388px;width:196px;height:2px;background:linear-gradient(90deg,#0000ff 0,#0200ff 24px,#3700ff 75px,#9b00ff 196px)"></i>
<i style="left:169px;top:390px;width:192px;height:2px;background:linear-gradient(90deg,#0000ff 0,#0300ff 23px,#3c00ff 79px,#9900ff 192px)"></i>
<i style="left:170px;top:392px;width:189px;height:2px;background:linear-gradient(90deg,#0000ff 0,#0200ff 22px,#3a00ff 76px,#9600ff 189px)"></i>
<i style="left:172px;top:394px;width:185px;height:2px;background:linear-gradient(90deg,#0000ff 0,#0200ff 20px,#3700ff 72px,#9400ff 185px)"></i>
<i style="left:174px;top:396px;width:181px;height:2px;background:linear-gradient(90deg,#0000ff 0,#0300ff 19px,#3c00ff 76px,#9100ff 181px)"></i>
<i style="left:176px;top:398px;width:177px;height:2px;background:linear-gradient(90deg,#0000ff 0,#0200ff 17px,#3a00ff 72px,#8f00ff 177px)"></i>
<i style="left:177px;top:400px;width:174px;height:2px;background:linear-gradient(90deg,#0000ff 0,#0300ff 17px,#3f00ff 77px,#8c00ff 174px)"></i>
<i style="left:179px;top:402px;width:170px;height:2px;background:linear-gradient(90deg,#0000ff 0,#0300ff 15px,#3c00ff 73px,#8a00ff 170px)"></i>
<i style="left:181px;top:404px;width:166px;height:2px;background:linear-gradient(90deg,#0000ff 0,#0200ff 13px,#3a00ff 69px,#8700ff 166px)"></i>
<i style="left:183px;top:406px;width:162px;height:2px;background:linear-gradient(90deg,#0000ff 0,#0300ff 12px,#3f00ff 73px,#8500ff 162px)"></i>
<i style="left:185px;top:408px;width:158px;height:2px;background:linear-gradient(90deg,#0000ff 0,#0300ff 10px,#3c00ff 69px,#8300ff 158px)"></i>
<i style="left:187px;top:410px;width:154px;height:2px;background:linear-gradient(90deg,#0000ff 0,#0400ff 9px,#4000ff 72px,#8000ff 154px)"></i>
<i style="left:189px;top:412px;width:150px;height:2px;background:linear-gradient(90deg,#0000ff 0,#0500ff 8px,#4300ff 75px,#7e00ff 150px)"></i>
<i style="left:191px;top:414px;width:146px;height:2px;background:linear-gradient(90deg,#0000ff 0,#1000ff 16px,#6600ff 118px,#7c00ff 146px)"></i>
<i style="left:193px;top:416px;width:142px;height:2px;background:linear-gradient(90deg,#0000ff 0,#3f00ff 67px,#7900ff 142px)"></i>
<i style="left:195px;top:418px;width:138px;height:2px;background:linear-gradient(90deg,#0000ff 0,#2e00ff 45px,#7700ff 138px)"></i>
<i style="left:197px;top:420px;width:134px;height:2px;background:linear-gradient(90deg,#0300ff 0,#3c00ff 61px,#7500ff 134px)"></i>
<i style="left:199px;top:422px;width:130px;height:2px;background:linear-gradient(90deg,#0500ff 0,#4500ff 70px,#7300ff 130px)"></i>
<i style="left:201px;top:424px;width:127px;height:2px;background:linear-gradient(90deg,#0700ff 0,#4c00ff 78px,#7100ff 127px)"></i>
<i style="left:203px;top:426px;width:123px;height:2px;background:linear-gradient(90deg,#0900ff 0,#5200ff 85px,#6f00ff 123px)"></i>
<i style="left:206px;top:428px;width:118px;height:2px;background:linear-gradient(90deg,#0c00ff 0,#5b00ff 94px,#6d00ff 118px)"></i>
<i style="left:208px;top:430px;width:114px;height:2px;background:linear-gradient(90deg,#0e00ff 0,#6000ff 100px,#6a00ff 114px)"></i>
<i style="left:210px;top:432px;width:110px;height:2px;background:linear-gradient(90deg,#0f00ff 0,#6500ff 105px,#6800ff 110px)"></i>
<i style="left:213px;top:434px;width:105px;height:2px;background:linear-gradient(90deg,#1200ff 0,#6600ff 105px)"></i>
<i style="left:215px;top:436px;width:101px;height:2px;background:linear-gradient(90deg,#1400ff 0,#6400ff 101px)"></i>
<i style="left:217px;top:438px;width:97px;height:2px;background:linear-gradient(90deg,#1500ff 0,#6200ff 97px)"></i>
<i style="left:220px;top:440px;width:92px;height:2px;background:linear-gradient(90deg,#1700ff 0,#6000ff 92px)"></i>
<i style="left:222px;top:442px;width:88px;height:2px;background:linear-gradient(90deg,#1900ff 0,#5e00ff 88px)"></i>
<i style="left:224px;top:444px;width:84px;height:2px;background:linear-gradient(90deg,#1a00ff 0,#5c00ff 84px)"></i>
<i style="left:227px;top:446px;width:79px;height:2px;background:linear-gradient(90deg,#1d00ff 0,#5a00ff 79px)"></i>
<i style="left:229px;top:448px;width:75px;height:2px;background:linear-gradient(90deg,#1e00ff 0,#5800ff 75px)"></i>
<i style="left:232px;top:450px;width:70px;height:2px;background:linear-gradient(90deg,#2000ff 0,#5600ff 70px)"></i>
<i style="left:234px;top:452px;width:66px;height:2px;background:linear-gradient(90deg,#2100ff 0,#5400ff 66px)"></i>
<i style="left:237px;top:454px;width:61px;height:2px;background:linear-gradient(90deg,#2300ff 0,#5200ff 61px)"></i>
<i style="left:239px;top:456px;width:57px;height:2px;background:linear-gradient(90deg,#2500ff 0,#5000ff 57px)"></i>
<i style="left:241px;top:458px;width:53px;height:2px;background:linear-gradient(90deg,#2600ff 0,#4e00ff 53px)"></i>
<i style="left:244px;top:460px;width:48px;height:2px;background:linear-gradient(90deg,#2800ff 0,#4c00ff 48px)"></i>
<i style="left:246px;top:462px;width:45px;height:2px;background:linear-gradient(90deg,#2900ff 0,#4a00ff 45px)"></i>
<i style="left:249px;top:464px;width:40px;height:2px;background:linear-gradient(90deg,#2b00ff 0,#4900ff 40px)"></i>
<i style="left:251px;top:466px;width:36px;height:2px;background:linear-gradient(90deg,#2c00ff 0,#4700ff 36px)"></i>
<i style="left:253px;top:468px;width:32px;height:2px;background:linear-gradient(90deg,#2d00ff 0,#4500ff 32px)"></i>
<i style="left:256px;top:470px;width:27px;height:2px;background:linear-gradient(90deg,#2f00ff 0,#4300ff 27px)"></i>
<i style="left:258px;top:472px;width:23px;height:2px;background:linear-gradient(90deg,#3000ff 0,#4100ff 23px)"></i>
<i style="left:261px;top:474px;width:18px;height:2px;background:linear-gradient(90deg,#3200ff 0,#3f00ff 18px)"></i>
<i style="left:264px;top:476px;width:13px;height:2px;background:linear-gradient(90deg,#3400ff 0,#3d00ff 13px)"></i>
<i style="left:267px;top:478px;width:7px;height:2px;background:linear-gradient(90deg,#3500ff 0,#3a00ff 7px)"></i>
</div></div>
<div id="insw" style="left:1457px;top:444px;width:199px;height:131px;border:1px solid #888;background:#262626;overflow:hidden"><div id="ins" style="left:0;top:0">
<i style="left:0px;top:0px;width:197px;height:2px;background:linear-gradient(90deg,#bdff00 0,#fffc00 161px,#ffed00 197px)"></i>
<i style="left:0px;top:2px;width:197px;height:2px;background:linear-gradient(90deg,#beff00 0,#fffc00 159px,#ffec00 197px)"></i>
<i style="left:0px;top:4px;width:197px;height:2px;background:linear-gradient(90deg,#beff00 0,#fffc00 157px,#ffec00 197px)"></i>
<i style="left:0px;top:6px;width:197px;height:2px;background:linear-gradient(90deg,#bfff00 0,#fffc00 156px,#ffeb00 197px)"></i>
<i style="left:0px;top:8px;width:197px;height:2px;background:linear-gradient(90deg,#c0ff00 0,#fffc00 154px,#ffea00 197px)"></i>
<i style="left:0px;top:10px;width:197px;height:2px;background:linear-gradient(90deg,#c0ff00 0,#fffc00 152px,#ffe900 197px)"></i>
<i style="left:0px;top:12px;width:197px;height:2px;background:linear-gradient(90deg,#c1ff00 0,#fffc00 150px,#ffe900 197px)"></i>
<i style="left:0px;top:14px;width:197px;height:2px;background:linear-gradient(90deg,#c2ff01 0,#fffc00 148px,#ffe800 197px)"></i>
<i style="left:0px;top:16px;width:197px;height:2px;background:linear-gradient(90deg,#c2ff02 0,#fffc00 146px,#ffe700 197px)"></i>
<i style="left:0px;top:18px;width:197px;height:2px;background:linear-gradient(90deg,#c3ff03 0,#fffc00 145px,#ffe700 197px)"></i>
<i style="left:0px;top:20px;width:197px;height:2px;background:linear-gradient(90deg,#c4ff04 0,#e0ff00 67px,#fffc00 143px,#ffe600 197px)"></i>
<i style="left:0px;top:22px;width:197px;height:2px;background:linear-gradient(90deg,#c4ff05 0,#dbff00 54px,#fffc00 141px,#ffe500 197px)"></i>
<i style="left:0px;top:24px;width:197px;height:2px;background:linear-gradient(90deg,#c5ff05 0,#dcff00 53px,#fffc00 139px,#ffe400 197px)"></i>
<i style="left:0px;top:26px;width:197px;height:2px;background:linear-gradient(90deg,#c6ff06 0,#ddff00 54px,#fffc00 137px,#ffe400 197px)"></i>
<i style="left:0px;top:28px;width:197px;height:2px;background:linear-gradient(90deg,#c6ff07 0,#deff00 55px,#fffc00 136px,#ffe300 197px)"></i>
<i style="left:0px;top:30px;width:197px;height:2px;background:linear-gradient(90deg,#c7ff08 0,#e0ff00 57px,#fffc00 134px,#ffe200 197px)"></i>
<i style="left:0px;top:32px;width:197px;height:2px;background:linear-gradient(90deg,#c8ff08 0,#e2ff00 60px,#fffc00 132px,#ffe100 197px)"></i>
<i style="left:0px;top:34px;width:197px;height:2px;background:linear-gradient(90deg,#c8ff09 0,#e4ff00 64px,#fffc00 130px,#ffe100 197px)"></i>
<i style="left:0px;top:36px;width:197px;height:2px;background:linear-gradient(90deg,#c9ff0a 0,#e6ff00 67px,#fffc00 129px,#ffe000 197px)"></i>
<i style="left:0px;top:38px;width:197px;height:2px;background:linear-gradient(90deg,#caff0a 0,#e9ff00 71px,#fffc00 127px,#ffdf00 197px)"></i>
<i style="left:0px;top:40px;width:197px;height:2px;background:linear-gradient(90deg,#cbff0b 0,#ebff00 74px,#fffc00 125px,#ffdf00 197px)"></i>
<i style="left:0px;top:42px;width:197px;height:2px;background:linear-gradient(90deg,#cbff0c 0,#edff00 77px,#fffc00 123px,#ffde00 197px)"></i>
<i style="left:0px;top:44px;width:197px;height:2px;background:linear-gradient(90deg,#ccff0c 0,#f0ff00 81px,#fffb00 122px,#ffdd00 197px)"></i>
<i style="left:0px;top:46px;width:197px;height:2px;background:linear-gradient(90deg,#cdff0d 0,#f3ff00 85px,#fffb00 120px,#ffdc00 197px)"></i>
<i style="left:0px;top:48px;width:197px;height:2px;background:linear-gradient(90deg,#cdff0e 0,#f5ff00 89px,#fffb00 120px,#ffdc00 197px)"></i>
<i style="left:0px;top:50px;width:197px;height:2px;background:linear-gradient(90deg,#ceff0e 0,#f7ff00 92px,#fffa00 119px,#ffdb00 197px)"></i>
<i style="left:0px;top:52px;width:197px;height:2px;background:linear-gradient(90deg,#cfff0f 0,#faff00 96px,#fff800 123px,#ffda00 197px)"></i>
<i style="left:0px;top:54px;width:197px;height:2px;background:linear-gradient(90deg,#d0ff10 0,#fcff00 99px,#ffd900 197px)"></i>
<i style="left:0px;top:56px;width:197px;height:2px;background:linear-gradient(90deg,#d0ff10 0,#ffff00 103px,#ffd900 197px)"></i>
<i style="left:0px;top:58px;width:197px;height:2px;background:linear-gradient(90deg,#d1ff11 0,#fffc00 107px,#ffd800 197px)"></i>
<i style="left:0px;top:60px;width:197px;height:2px;background:linear-gradient(90deg,#d2ff12 0,#fffc00 106px,#ffd700 197px)"></i>
<i style="left:0px;top:62px;width:197px;height:2px;background:linear-gradient(90deg,#d3ff12 0,#fffc00 104px,#ffd700 197px)"></i>
<i style="left:0px;top:64px;width:197px;height:2px;background:linear-gradient(90deg,#d3ff13 0,#fffc00 102px,#ffd600 197px)"></i>
<i style="left:0px;top:66px;width:197px;height:2px;background:linear-gradient(90deg,#d4ff14 0,#fffc01 100px,#ffd500 197px)"></i>
<i style="left:0px;top:68px;width:197px;height:2px;background:linear-gradient(90deg,#d5ff14 0,#fffc03 99px,#ffd500 197px)"></i>
<i style="left:0px;top:70px;width:197px;height:2px;background:linear-gradient(90deg,#d6ff15 0,#fffc04 97px,#ffe100 161px,#ffd400 197px)"></i>
<i style="left:0px;top:72px;width:197px;height:2px;background:linear-gradient(90deg,#d6ff16 0,#fffc05 95px,#ffe700 144px,#ffd300 197px)"></i>
<i style="left:0px;top:74px;width:197px;height:2px;background:linear-gradient(90deg,#d7ff16 0,#fffc06 93px,#ffe700 142px,#ffd200 197px)"></i>
<i style="left:0px;top:76px;width:197px;height:2px;background:linear-gradient(90deg,#d8ff17 0,#fffc08 91px,#ffe600 143px,#ffd200 197px)"></i>
<i style="left:0px;top:78px;width:197px;height:2px;background:linear-gradient(90deg,#d9ff18 0,#fffc09 89px,#ffe400 146px,#ffd100 197px)"></i>
<i style="left:0px;top:80px;width:197px;height:2px;background:linear-gradient(90deg,#d9ff18 0,#fffc0a 87px,#ffe100 150px,#ffd000 197px)"></i>
<i style="left:0px;top:82px;width:197px;height:2px;background:linear-gradient(90deg,#daff19 0,#fffc0b 86px,#ffe000 153px,#ffd000 197px)"></i>
<i style="left:0px;top:84px;width:197px;height:2px;background:linear-gradient(90deg,#dbff19 0,#fffc0c 84px,#ffde00 156px,#ffcf00 197px)"></i>
<i style="left:0px;top:86px;width:197px;height:2px;background:linear-gradient(90deg,#dcff1a 0,#fffc0d 82px,#ffdc00 159px,#ffce00 197px)"></i>
<i style="left:0px;top:88px;width:197px;height:2px;background:linear-gradient(90deg,#dcff1b 0,#fffc0e 80px,#ffda00 163px,#ffce00 197px)"></i>
<i style="left:0px;top:90px;width:197px;height:2px;background:linear-gradient(90deg,#ddff1b 0,#fffc0f 78px,#ffd700 167px,#ffcd00 197px)"></i>
<i style="left:0px;top:92px;width:197px;height:2px;background:linear-gradient(90deg,#deff1c 0,#fffc10 76px,#ffd500 171px,#ffcc00 197px)"></i>
<i style="left:0px;top:94px;width:197px;height:2px;background:linear-gradient(90deg,#dfff1d 0,#fffc11 75px,#ffd300 175px,#ffcc00 197px)"></i>
<i style="left:0px;top:96px;width:197px;height:2px;background:linear-gradient(90deg,#e0ff1d 0,#fffc12 73px,#ffd100 178px,#ffcb00 197px)"></i>
<i style="left:0px;top:98px;width:197px;height:2px;background:linear-gradient(90deg,#e0ff1e 0,#fffc13 71px,#ffcf00 182px,#ffca00 197px)"></i>
<i style="left:0px;top:100px;width:197px;height:2px;background:linear-gradient(90deg,#e1ff1f 0,#fffc14 69px,#ffcd00 186px,#ffc900 197px)"></i>
<i style="left:0px;top:102px;width:197px;height:2px;background:linear-gradient(90deg,#e2ff1f 0,#fffc15 67px,#ffcb00 190px,#ffc900 197px)"></i>
<i style="left:0px;top:104px;width:197px;height:2px;background:linear-gradient(90deg,#e3ff20 0,#fffc16 66px,#ffc900 194px,#ffc800 197px)"></i>
<i style="left:0px;top:106px;width:197px;height:2px;background:linear-gradient(90deg,#e4ff21 0,#fffc17 64px,#ffc700 197px)"></i>
<i style="left:0px;top:108px;width:197px;height:2px;background:linear-gradient(90deg,#e4ff21 0,#fffc18 62px,#ffc700 197px)"></i>
<i style="left:0px;top:110px;width:197px;height:2px;background:linear-gradient(90deg,#e5ff22 0,#fffc19 60px,#ffc600 197px)"></i>
<i style="left:0px;top:112px;width:197px;height:2px;background:linear-gradient(90deg,#e6ff22 0,#fffc1a 58px,#ffc500 197px)"></i>
<i style="left:0px;top:114px;width:197px;height:2px;background:linear-gradient(90deg,#e7ff23 0,#fffc1b 57px,#ffc500 197px)"></i>
<i style="left:0px;top:116px;width:197px;height:2px;background:linear-gradient(90deg,#e8ff24 0,#fffc1c 55px,#ffc401 197px)"></i>
<i style="left:0px;top:118px;width:197px;height:2px;background:linear-gradient(90deg,#e9ff24 0,#fffc1d 53px,#ffc302 197px)"></i>
<i style="left:0px;top:120px;width:197px;height:2px;background:linear-gradient(90deg,#e9ff25 0,#fffc1e 51px,#ffc302 197px)"></i>
<i style="left:0px;top:122px;width:197px;height:2px;background:linear-gradient(90deg,#eaff26 0,#fffc1f 49px,#ffc304 195px,#ffc203 197px)"></i>
<i style="left:0px;top:124px;width:197px;height:2px;background:linear-gradient(90deg,#ebff26 0,#fffb1f 48px,#ffc205 194px,#ffc104 197px)"></i>
<i style="left:0px;top:126px;width:197px;height:2px;background:linear-gradient(90deg,#ecff27 0,#fffb20 46px,#ffc206 192px,#ffc105 197px)"></i>
<i style="left:0px;top:128px;width:197px;height:1px;background:linear-gradient(90deg,#edff28 0,#fffc21 44px,#ffc207 190px,#ffc005 197px)"></i>
</div></div>
<div style="left:1406px;top:584px;width:252px;height:28px;background:#333"></div>
<div style="left:324px;top:666px;width:1348px;height:228px;background:#0e0e0e"></div>
<div style="left:326px;top:667.5px;width:1344px;height:24.5px;background:linear-gradient(#2f2f2f 0,#2d2d2d 50%,#191919 50%,#1b1b1b 80%,#262626)"></div>
<div style="left:326px;top:691.5px;width:1344px;height:24.6px;background:#414141"></div>
<div style="left:326px;top:715.8px;width:1344px;height:23.5px;background:#7d7d7d"></div>
<div style="left:326px;top:739.0px;width:1344px;height:23.2px;background:#414141"></div>
<div style="left:326px;top:761.9px;width:1344px;height:23.2px;background:#7d7d7d"></div>
<div style="left:326px;top:784.8px;width:1344px;height:23.9px;background:#414141"></div>
<div style="left:326px;top:808.4px;width:1344px;height:23.5px;background:#7d7d7d"></div>
<div style="left:326px;top:831.6px;width:1344px;height:23.5px;background:#414141"></div>
<div style="left:326px;top:854.8px;width:1344px;height:23.5px;background:#7d7d7d"></div>
<div style="left:326px;top:878px;width:1344px;height:15px;background:#5e5e5e"></div>
<div style="left:327px;top:879px;width:16px;height:13px;background:#838383;border:1px solid #9c9c9c;border-radius:3px"></div>
<div style="left:1653px;top:879px;width:16px;height:13px;background:#838383;border:1px solid #9c9c9c;border-radius:3px"></div>
<div style="left:345px;top:879px;width:638px;height:13px;background:#454545;border-radius:7px"></div>
<div style="left:4px;top:934px;width:1265px;height:77px;background:#3a3a3a"></div>
<div style="left:-29.6px;top:934.6px;width:62.5px;height:60.8px;border-radius:6px;background:linear-gradient(#b0aeac,#8e8e8e 52%,#6c6c6c);box-shadow:inset 0 1px 0 #bcbab8"></div>
<div style="left:-23.0px;top:941px;width:50px;height:14.6px;border-radius:4px;background:#8c86c8;box-shadow:inset 0 2px 2px rgba(0,0,0,.35),inset 0 -1px 1px rgba(255,255,255,.25)"></div>
<div style="left:35.4px;top:934.6px;width:62.5px;height:60.8px;border-radius:6px;background:linear-gradient(#b0aeac,#8e8e8e 52%,#6c6c6c);box-shadow:inset 0 1px 0 #bcbab8"></div>
<div style="left:42.0px;top:941px;width:50px;height:14.6px;border-radius:4px;background:#66c4ae;box-shadow:inset 0 2px 2px rgba(0,0,0,.35),inset 0 -1px 1px rgba(255,255,255,.25)"></div>
<div style="left:100.4px;top:934.6px;width:62.5px;height:60.8px;border-radius:6px;background:linear-gradient(#b0aeac,#8e8e8e 52%,#6c6c6c);box-shadow:inset 0 1px 0 #bcbab8"></div>
<div style="left:107.0px;top:941px;width:50px;height:29.6px;border-radius:4px;background:#de7c2c;box-shadow:inset 0 2px 2px rgba(0,0,0,.35),inset 0 -1px 1px rgba(255,255,255,.25)"></div>
<div style="left:165.4px;top:934.6px;width:62.5px;height:60.8px;border-radius:6px;background:linear-gradient(#b0aeac,#8e8e8e 52%,#6c6c6c);box-shadow:inset 0 1px 0 #bcbab8"></div>
<div style="left:172.0px;top:941px;width:50px;height:14.6px;border-radius:4px;background:#4a5eb0;box-shadow:inset 0 2px 2px rgba(0,0,0,.35),inset 0 -1px 1px rgba(255,255,255,.25)"></div>
<div style="left:230.5px;top:934.6px;width:62.5px;height:60.8px;border-radius:6px;background:linear-gradient(#b0aeac,#8e8e8e 52%,#6c6c6c);box-shadow:inset 0 1px 0 #bcbab8"></div>
<div style="left:237.1px;top:941px;width:50px;height:14.6px;border-radius:4px;background:#ca5666;box-shadow:inset 0 2px 2px rgba(0,0,0,.35),inset 0 -1px 1px rgba(255,255,255,.25)"></div>
<div style="left:295.5px;top:934.6px;width:62.5px;height:60.8px;border-radius:6px;background:linear-gradient(#b0aeac,#8e8e8e 52%,#6c6c6c);box-shadow:inset 0 1px 0 #bcbab8"></div>
<div style="left:302.1px;top:941px;width:50px;height:29.6px;border-radius:4px;background:#5e3c70;box-shadow:inset 0 2px 2px rgba(0,0,0,.35),inset 0 -1px 1px rgba(255,255,255,.25)"></div>
<div style="left:360.5px;top:934.6px;width:62.5px;height:60.8px;border-radius:6px;background:linear-gradient(#b0aeac,#8e8e8e 52%,#6c6c6c);box-shadow:inset 0 1px 0 #bcbab8"></div>
<div style="left:367.1px;top:941px;width:50px;height:14.6px;border-radius:4px;background:#a7c742;box-shadow:inset 0 2px 2px rgba(0,0,0,.35),inset 0 -1px 1px rgba(255,255,255,.25)"></div>
<div style="left:425.5px;top:934.6px;width:62.5px;height:60.8px;border-radius:6px;background:linear-gradient(#b0aeac,#8e8e8e 52%,#6c6c6c);box-shadow:inset 0 1px 0 #bcbab8"></div>
<div style="left:432.1px;top:941px;width:50px;height:14.6px;border-radius:4px;background:#eaa52f;box-shadow:inset 0 2px 2px rgba(0,0,0,.35),inset 0 -1px 1px rgba(255,255,255,.25)"></div>
<div style="left:490.5px;top:934.6px;width:62.5px;height:60.8px;border-radius:6px;background:linear-gradient(#b0aeac,#8e8e8e 52%,#6c6c6c);box-shadow:inset 0 1px 0 #bcbab8"></div>
<div style="left:497.1px;top:941px;width:50px;height:29.6px;border-radius:4px;background:#343c9c;box-shadow:inset 0 2px 2px rgba(0,0,0,.35),inset 0 -1px 1px rgba(255,255,255,.25)"></div>
<div style="left:555.6px;top:934.6px;width:62.5px;height:60.8px;border-radius:6px;background:linear-gradient(#b0aeac,#8e8e8e 52%,#6c6c6c);box-shadow:inset 0 1px 0 #bcbab8"></div>
<div style="left:562.2px;top:941px;width:50px;height:29.6px;border-radius:4px;background:#469a4c;box-shadow:inset 0 2px 2px rgba(0,0,0,.35),inset 0 -1px 1px rgba(255,255,255,.25)"></div>
<div style="left:620.6px;top:934.6px;width:62.5px;height:60.8px;border-radius:6px;background:linear-gradient(#b0aeac,#8e8e8e 52%,#6c6c6c);box-shadow:inset 0 1px 0 #bcbab8"></div>
<div style="left:627.2px;top:941px;width:50px;height:29.6px;border-radius:4px;background:#b5323c;box-shadow:inset 0 2px 2px rgba(0,0,0,.35),inset 0 -1px 1px rgba(255,255,255,.25)"></div>
<div style="left:685.6px;top:934.6px;width:62.5px;height:60.8px;border-radius:6px;background:linear-gradient(#b0aeac,#8e8e8e 52%,#6c6c6c);box-shadow:inset 0 1px 0 #bcbab8"></div>
<div style="left:692.2px;top:941px;width:50px;height:29.6px;border-radius:4px;background:#efc82a;box-shadow:inset 0 2px 2px rgba(0,0,0,.35),inset 0 -1px 1px rgba(255,255,255,.25)"></div>
<div style="left:750.6px;top:934.6px;width:62.5px;height:60.8px;border-radius:6px;background:linear-gradient(#b0aeac,#8e8e8e 52%,#6c6c6c);box-shadow:inset 0 1px 0 #bcbab8"></div>
<div style="left:757.2px;top:941px;width:50px;height:29.6px;border-radius:4px;background:#c45a9c;box-shadow:inset 0 2px 2px rgba(0,0,0,.35),inset 0 -1px 1px rgba(255,255,255,.25)"></div>
<div style="left:815.6px;top:934.6px;width:62.5px;height:60.8px;border-radius:6px;background:linear-gradient(#b0aeac,#8e8e8e 52%,#6c6c6c);box-shadow:inset 0 1px 0 #bcbab8"></div>
<div style="left:822.2px;top:941px;width:50px;height:29.6px;border-radius:4px;background:#0f8fb5;box-shadow:inset 0 2px 2px rgba(0,0,0,.35),inset 0 -1px 1px rgba(255,255,255,.25)"></div>
<div style="left:880.7px;top:934.6px;width:62.5px;height:60.8px;border-radius:6px;background:linear-gradient(#b0aeac,#8e8e8e 52%,#6c6c6c);box-shadow:inset 0 1px 0 #bcbab8"></div>
<div style="left:887.3px;top:941px;width:50px;height:29.6px;border-radius:4px;background:#ff0000;box-shadow:inset 0 2px 2px rgba(0,0,0,.35),inset 0 -1px 1px rgba(255,255,255,.25)"></div>
<div style="left:945.7px;top:934.6px;width:62.5px;height:60.8px;border-radius:6px;background:linear-gradient(#b0aeac,#8e8e8e 52%,#6c6c6c);box-shadow:inset 0 1px 0 #bcbab8"></div>
<div style="left:952.3px;top:941px;width:50px;height:14.6px;border-radius:4px;background:#00ff00;box-shadow:inset 0 2px 2px rgba(0,0,0,.35),inset 0 -1px 1px rgba(255,255,255,.25)"></div>
<div style="left:1010.7px;top:934.6px;width:62.5px;height:60.8px;border-radius:6px;background:linear-gradient(#b0aeac,#8e8e8e 52%,#6c6c6c);box-shadow:inset 0 1px 0 #bcbab8"></div>
<div style="left:1017.3px;top:941px;width:50px;height:14.6px;border-radius:4px;background:#0000ff;box-shadow:inset 0 2px 2px rgba(0,0,0,.35),inset 0 -1px 1px rgba(255,255,255,.25)"></div>
<div style="left:1075.7px;top:934.6px;width:62.5px;height:60.8px;border-radius:6px;background:linear-gradient(#b0aeac,#8e8e8e 52%,#6c6c6c);box-shadow:inset 0 1px 0 #bcbab8"></div>
<div style="left:1082.3px;top:941px;width:50px;height:14.6px;border-radius:4px;background:#00ffff;box-shadow:inset 0 2px 2px rgba(0,0,0,.35),inset 0 -1px 1px rgba(255,255,255,.25)"></div>
<div style="left:1140.7px;top:934.6px;width:62.5px;height:60.8px;border-radius:6px;background:linear-gradient(#b0aeac,#8e8e8e 52%,#6c6c6c);box-shadow:inset 0 1px 0 #bcbab8"></div>
<div style="left:1147.3px;top:941px;width:50px;height:14.6px;border-radius:4px;background:#ff00ff;box-shadow:inset 0 2px 2px rgba(0,0,0,.35),inset 0 -1px 1px rgba(255,255,255,.25)"></div>
<div style="left:1205.8px;top:934.6px;width:62.5px;height:60.8px;border-radius:6px;background:linear-gradient(#1e1e1e,#2a2a2a 60%,#383838);box-shadow:inset 0 1px 0 #333"></div>
<div style="left:1212.4px;top:941px;width:50px;height:14.6px;border-radius:4px;background:#ffff00;box-shadow:inset 0 2px 2px rgba(0,0,0,.35),inset 0 -1px 1px rgba(255,255,255,.25)"></div>
<div style="left:0;top:932px;width:3px;height:79px;background:#555"></div>
<div style="left:3px;top:932px;width:1px;height:79px;background:#262626"></div>
<div style="left:4px;top:995.4px;width:1265px;height:16px;background:#606060"></div>
<div style="left:5px;top:997px;width:14px;height:12px;background:#838383;border:1px solid #9c9c9c;border-radius:3px"></div>
<div style="left:1251px;top:997px;width:16px;height:12px;background:#838383;border:1px solid #9c9c9c;border-radius:3px"></div>
<div style="left:454px;top:997px;width:795px;height:12px;background:#454545;border-radius:6px"></div>
<div style="left:1269.4px;top:934.4px;width:59.6px;height:23px;border-radius:5px 5px 0 0;background:linear-gradient(#b0b0b0,#8c8c8c);border-bottom:1px solid #4a4a4a"></div>
<div style="left:1269.4px;top:957.4px;width:59.6px;height:54px;background:linear-gradient(#8e8e8e,#727272)"></div>
<div style="left:1279.5px;top:965.2px;width:39.5px;height:38.3px;border-radius:6px;border:3px solid #222;background:linear-gradient(#c4c4c4,#aaaaaa 49%,#969696 50%,#9a9a9a)"></div>
<div style="left:1290.8px;top:975.9px;width:17.2px;height:16.9px;background:linear-gradient(#222 0,#1a1a1a 48%,#000 50%)"></div>
<div style="left:1329.7px;top:933.8px;width:58.4px;height:38.6px;background:linear-gradient(#a6a6a6,#8a8a8a 50%,#707070);border-right:1px solid #444;border-bottom:1px solid #444"></div>
<div style="left:1388.1px;top:933.8px;width:56.1px;height:38.6px;background:linear-gradient(#a6a6a6,#8a8a8a 50%,#707070);border-right:1px solid #444;border-bottom:1px solid #444"></div>
<div style="left:1444.2px;top:933.8px;width:56.5px;height:38.6px;background:linear-gradient(#a6a6a6,#8a8a8a 50%,#707070);border-right:1px solid #444;border-bottom:1px solid #444"></div>
<div style="left:1500.7px;top:933.8px;width:56.4px;height:38.6px;background:linear-gradient(#a6a6a6,#8a8a8a 50%,#707070);border-right:1px solid #444;border-bottom:1px solid #444"></div>
<div style="left:1557.1px;top:933.8px;width:56.5px;height:38.6px;background:linear-gradient(#2e2e2e,#3a3a3a);border-right:1px solid #444;border-bottom:1px solid #444"></div>
<div style="left:1613.6px;top:933.8px;width:58.9px;height:38.6px;background:linear-gradient(#a6a6a6,#8a8a8a 50%,#707070);border-right:1px solid #444;border-bottom:1px solid #444"></div>
<div style="left:1329.7px;top:973.4px;width:171px;height:38px;background:linear-gradient(#aaaaaa,#909090 50%,#787878);border-right:1px solid #444"></div>
<div style="left:1501.4px;top:973.4px;width:171px;height:38px;background:linear-gradient(#aaaaaa,#909090 50%,#787878)"></div>
<svg id="ov" width="1672" height="1011" viewBox="0 0 1672 1011">
<defs><linearGradient id="arrg" x1="0" x2="0" y1="0" y2="1"><stop offset="0" stop-color="#464646"/><stop offset="1" stop-color="#707070"/></linearGradient>
<linearGradient id="arrg2" x1="0" x2="0" y1="0" y2="1"><stop offset="0" stop-color="#505050"/><stop offset="1" stop-color="#8c8c8c"/></linearGradient>
<linearGradient id="bg0" x1="0" x2="1" y1="0" y2="0"><stop offset="0" stop-color="#ffff51"/><stop offset="0.22" stop-color="#ffff00"/><stop offset="0.6" stop-color="#eded00"/><stop offset="1" stop-color="#939300"/></linearGradient>
<linearGradient id="bg1" x1="0" x2="1" y1="0" y2="0"><stop offset="0" stop-color="#ff51ff"/><stop offset="0.22" stop-color="#ff00ff"/><stop offset="0.6" stop-color="#ed00ed"/><stop offset="1" stop-color="#930093"/></linearGradient>
<linearGradient id="bg2" x1="0" x2="1" y1="0" y2="0"><stop offset="0" stop-color="#51ffff"/><stop offset="0.22" stop-color="#00ffff"/><stop offset="0.6" stop-color="#00eded"/><stop offset="1" stop-color="#009393"/></linearGradient>
<linearGradient id="bg3" x1="0" x2="1" y1="0" y2="0"><stop offset="0" stop-color="#5151ff"/><stop offset="0.22" stop-color="#0000ff"/><stop offset="0.6" stop-color="#0000ed"/><stop offset="1" stop-color="#000093"/></linearGradient>
<linearGradient id="bg4" x1="0" x2="1" y1="0" y2="0"><stop offset="0" stop-color="#51ff51"/><stop offset="0.22" stop-color="#00ff00"/><stop offset="0.6" stop-color="#00ed00"/><stop offset="1" stop-color="#009300"/></linearGradient>
<linearGradient id="bg5" x1="0" x2="1" y1="0" y2="0"><stop offset="0" stop-color="#ff5151"/><stop offset="0.22" stop-color="#ff0000"/><stop offset="0.6" stop-color="#ed0000"/><stop offset="1" stop-color="#930000"/></linearGradient>
<linearGradient id="bg6" x1="0" x2="1" y1="0" y2="0"><stop offset="0" stop-color="#5bb2cc"/><stop offset="0.22" stop-color="#0f8fb5"/><stop offset="0.6" stop-color="#0d84a8"/><stop offset="1" stop-color="#085268"/></linearGradient>
<linearGradient id="bg7" x1="0" x2="1" y1="0" y2="0"><stop offset="0" stop-color="#d68ebb"/><stop offset="0.22" stop-color="#c45a9c"/><stop offset="0.6" stop-color="#b65391"/><stop offset="1" stop-color="#71345a"/></linearGradient>
<linearGradient id="bg8" x1="0" x2="1" y1="0" y2="0"><stop offset="0" stop-color="#f4d96e"/><stop offset="0.22" stop-color="#efc82a"/><stop offset="0.6" stop-color="#deba27"/><stop offset="1" stop-color="#8a7318"/></linearGradient>
<linearGradient id="bg9" x1="0" x2="1" y1="0" y2="0"><stop offset="0" stop-color="#cc737a"/><stop offset="0.22" stop-color="#b5323c"/><stop offset="0.6" stop-color="#a82e37"/><stop offset="1" stop-color="#681c22"/></linearGradient>
<linearGradient id="bg10" x1="0" x2="1" y1="0" y2="0"><stop offset="0" stop-color="#81ba85"/><stop offset="0.22" stop-color="#469a4c"/><stop offset="0.6" stop-color="#418f46"/><stop offset="1" stop-color="#28592c"/></linearGradient>
<linearGradient id="bg11" x1="0" x2="1" y1="0" y2="0"><stop offset="0" stop-color="#747abb"/><stop offset="0.22" stop-color="#343c9c"/><stop offset="0.6" stop-color="#303791"/><stop offset="1" stop-color="#1e225a"/></linearGradient>
<linearGradient id="bg12" x1="0" x2="1" y1="0" y2="0"><stop offset="0" stop-color="#f0c171"/><stop offset="0.22" stop-color="#eaa52f"/><stop offset="0.6" stop-color="#d9992b"/><stop offset="1" stop-color="#875f1b"/></linearGradient>
<linearGradient id="bg13" x1="0" x2="1" y1="0" y2="0"><stop offset="0" stop-color="#c3d87e"/><stop offset="0.22" stop-color="#a7c742"/><stop offset="0.6" stop-color="#9bb93d"/><stop offset="1" stop-color="#607326"/></linearGradient>
<linearGradient id="bg14" x1="0" x2="1" y1="0" y2="0"><stop offset="0" stop-color="#917a9d"/><stop offset="0.22" stop-color="#5e3c70"/><stop offset="0.6" stop-color="#573768"/><stop offset="1" stop-color="#362240"/></linearGradient>
<linearGradient id="bg15" x1="0" x2="1" y1="0" y2="0"><stop offset="0" stop-color="#da8c96"/><stop offset="0.22" stop-color="#ca5666"/><stop offset="0.6" stop-color="#bb4f5e"/><stop offset="1" stop-color="#75313b"/></linearGradient>
<linearGradient id="bg16" x1="0" x2="1" y1="0" y2="0"><stop offset="0" stop-color="#8391c9"/><stop offset="0.22" stop-color="#4a5eb0"/><stop offset="0.6" stop-color="#4457a3"/><stop offset="1" stop-color="#2a3666"/></linearGradient>
<linearGradient id="bg17" x1="0" x2="1" y1="0" y2="0"><stop offset="0" stop-color="#e8a56f"/><stop offset="0.22" stop-color="#de7c2c"/><stop offset="0.6" stop-color="#ce7328"/><stop offset="1" stop-color="#804719"/></linearGradient>
<linearGradient id="bg18" x1="0" x2="1" y1="0" y2="0"><stop offset="0" stop-color="#96d6c7"/><stop offset="0.22" stop-color="#66c4ae"/><stop offset="0.6" stop-color="#5eb6a1"/><stop offset="1" stop-color="#3b7164"/></linearGradient>
<linearGradient id="bg19" x1="0" x2="1" y1="0" y2="0"><stop offset="0" stop-color="#afabd4"/><stop offset="0.22" stop-color="#8a84c0"/><stop offset="0.6" stop-color="#807ab2"/><stop offset="1" stop-color="#504c6f"/></linearGradient>
<linearGradient id="bg20" x1="0" x2="1" y1="0" y2="0"><stop offset="0" stop-color="#8c9b7e"/><stop offset="0.22" stop-color="#566c42"/><stop offset="0.6" stop-color="#4f643d"/><stop offset="1" stop-color="#313e26"/></linearGradient>
<linearGradient id="bg21" x1="0" x2="1" y1="0" y2="0"><stop offset="0" stop-color="#91a7bf"/><stop offset="0.22" stop-color="#5e7ea2"/><stop offset="0.6" stop-color="#577596"/><stop offset="1" stop-color="#36495d"/></linearGradient>
<linearGradient id="bg22" x1="0" x2="1" y1="0" y2="0"><stop offset="0" stop-color="#d9baab"/><stop offset="0.22" stop-color="#c89a84"/><stop offset="0.6" stop-color="#ba8f7a"/><stop offset="1" stop-color="#73594c"/></linearGradient>
<linearGradient id="bg23" x1="0" x2="1" y1="0" y2="0"><stop offset="0" stop-color="#a18a81"/><stop offset="0.22" stop-color="#755447"/><stop offset="0.6" stop-color="#6c4e42"/><stop offset="1" stop-color="#433029"/></linearGradient>
<linearGradient id="bg24" x1="0" x2="1" y1="0" y2="0"><stop offset="0" stop-color="#515151"/><stop offset="0.22" stop-color="#000000"/><stop offset="0.6" stop-color="#000000"/><stop offset="1" stop-color="#000000"/></linearGradient>
<linearGradient id="bg25" x1="0" x2="1" y1="0" y2="0"><stop offset="0" stop-color="#bebebe"/><stop offset="0.22" stop-color="#a0a0a0"/><stop offset="0.6" stop-color="#949494"/><stop offset="1" stop-color="#5c5c5c"/></linearGradient>
<linearGradient id="bg26" x1="0" x2="1" y1="0" y2="0"><stop offset="0" stop-color="#cecece"/><stop offset="0.22" stop-color="#b8b8b8"/><stop offset="0.6" stop-color="#ababab"/><stop offset="1" stop-color="#6a6a6a"/></linearGradient>
<linearGradient id="bg27" x1="0" x2="1" y1="0" y2="0"><stop offset="0" stop-color="#dfdfdf"/><stop offset="0.22" stop-color="#d0d0d0"/><stop offset="0.6" stop-color="#c1c1c1"/><stop offset="1" stop-color="#787878"/></linearGradient>
<linearGradient id="bg28" x1="0" x2="1" y1="0" y2="0"><stop offset="0" stop-color="#eeeeee"/><stop offset="0.22" stop-color="#e6e6e6"/><stop offset="0.6" stop-color="#d5d5d5"/><stop offset="1" stop-color="#858585"/></linearGradient>
<linearGradient id="bg29" x1="0" x2="1" y1="0" y2="0"><stop offset="0" stop-color="#ffffff"/><stop offset="0.22" stop-color="#ffffff"/><stop offset="0.6" stop-color="#ededed"/><stop offset="1" stop-color="#939393"/></linearGradient>
<linearGradient id="yg" x1="0" x2="0" y1="0" y2="1"><stop offset="0" stop-color="#ffff5a"/><stop offset="0.15" stop-color="#ffff18"/><stop offset="0.3" stop-color="#ffff00"/><stop offset="0.5" stop-color="#fcfc00"/><stop offset="0.66" stop-color="#e4e400"/><stop offset="0.8" stop-color="#bcbc00"/><stop offset="0.9" stop-color="#969600"/><stop offset="1" stop-color="#5e5e00"/></linearGradient>
<linearGradient id="ygl"><stop offset="0" stop-color="#c8c832"/><stop offset="1" stop-color="#c8c832"/></linearGradient>
<linearGradient id="cbg" x1="0" x2="0" y1="0" y2="1"><stop offset="0" stop-color="#767676"/><stop offset="1" stop-color="#a8a8a8"/></linearGradient></defs>
<text x="11.0" y="29.6" font-size="14.4" fill="#e8e8e8" textLength="57.5" lengthAdjust="spacingAndGlyphs">History 1</text>
<text x="91.3" y="32.0" font-size="13.5" fill="#a0a0a0" textLength="8.0" lengthAdjust="spacingAndGlyphs">+</text>
<circle cx="1167.5" cy="23.6" r="11.4" fill="url(#arrg)"/>
<path d="M1161.2 21.8h12.6l-6.3 6.4z" fill="#f6f6f6"/>
<text x="1069.0" y="18.6" font-size="13.5" fill="#eee" textLength="82.0" lengthAdjust="spacingAndGlyphs">X-Rite i1Pro 3</text>
<text x="1069.0" y="37.6" font-size="13.5" fill="#eee" textLength="70.0" lengthAdjust="spacingAndGlyphs">Direct View</text>
<circle cx="1217.3" cy="23.8" r="14.6" fill="#0505e6" stroke="#fff" stroke-width="1.3"/>
<text x="1208.3" y="28.0" font-size="11.5" fill="#fff" textLength="18.0" lengthAdjust="spacingAndGlyphs">684</text>
<circle cx="1386.0" cy="23.6" r="11.4" fill="url(#arrg)"/>
<path d="M1379.7 21.8h12.6l-6.3 6.4z" fill="#f6f6f6"/>
<text x="1255.5" y="18.6" font-size="13.5" fill="#eee" textLength="79.5" lengthAdjust="spacingAndGlyphs">Mobile Forge</text>
<circle cx="1573.0" cy="23.6" r="11.4" fill="url(#arrg)"/>
<path d="M1566.7 21.8h12.6l-6.3 6.4z" fill="#f6f6f6"/>
<text x="1424.7" y="18.6" font-size="13.5" fill="#eee" textLength="131.5" lengthAdjust="spacingAndGlyphs">Direct Display Control</text>
<circle cx="1618.1" cy="22.4" r="12.2" fill="url(#arrg2)"/><circle cx="1656.5" cy="22.4" r="12.2" fill="url(#arrg2)"/>
<path d="M1616.67 16.57L1616.90 14.49L1619.30 14.49L1619.53 16.57L1621.21 17.27L1622.85 15.96L1624.54 17.65L1623.23 19.29L1623.93 20.97L1626.01 21.20L1626.01 23.60L1623.93 23.83L1623.23 25.51L1624.54 27.15L1622.85 28.84L1621.21 27.53L1619.53 28.23L1619.30 30.31L1616.90 30.31L1616.67 28.23L1614.99 27.53L1613.35 28.84L1611.66 27.15L1612.97 25.51L1612.27 23.83L1610.19 23.60L1610.19 21.20L1612.27 20.97L1612.97 19.29L1611.66 17.65L1613.35 15.96L1614.99 17.27ZM1614.20 22.40 a3.90 3.90 0 1 0 7.80 0a3.90 3.90 0 1 0 -7.80 0Z" fill="#dedede" fill-rule="evenodd" stroke="#dedede" stroke-width="0.8" stroke-linejoin="round"/>
<path d="M1660.3 15.1v12.7l-7.3-6.35z" fill="#f6f6f6"/>
<text x="11.8" y="129.9" font-size="42" fill="#f0f0f0" textLength="240.5" lengthAdjust="spacingAndGlyphs">ColorChecker</text>
<text x="54.3" y="683.3" font-size="28.6" fill="#eee" textLength="232.7" lengthAdjust="spacingAndGlyphs">Avg dE2000: 5,24</text>
<text x="41.9" y="723.7" font-size="28.6" fill="#eee" textLength="257.2" lengthAdjust="spacingAndGlyphs">Max dE2000: 10,83</text>
<text x="18.4" y="771.7" font-size="28.6" fill="#eee" textLength="218.4" lengthAdjust="spacingAndGlyphs">Current Reading</text>
<text x="18.4" y="807.4" font-size="25" fill="#eee" textLength="102.2" lengthAdjust="spacingAndGlyphs">x: 0,4096</text>
<text x="174.8" y="807.4" font-size="25" fill="#eee" textLength="103.2" lengthAdjust="spacingAndGlyphs">y: 0,5256</text>
<text x="18.4" y="849.0" font-size="25" fill="#eee" textLength="109.9" lengthAdjust="spacingAndGlyphs">fL: 140,17</text>
<text x="18.4" y="883.2" font-size="25" fill="#eee" textLength="158.1" lengthAdjust="spacingAndGlyphs">cd/m²: 480,27</text>
<rect x="24.00" y="276.00" width="335.30" height="331.50" fill="#262626"/>
<line x1="67.20" y1="276.00" x2="67.20" y2="607.50" stroke="#9c9c9c" stroke-width="1.2"/>
<line x1="112.40" y1="276.00" x2="112.40" y2="607.50" stroke="#9c9c9c" stroke-width="1.2"/>
<line x1="157.50" y1="276.00" x2="157.50" y2="607.50" stroke="#9c9c9c" stroke-width="1.2"/>
<line x1="202.50" y1="276.00" x2="202.50" y2="607.50" stroke="#9c9c9c" stroke-width="1.2"/>
<line x1="247.40" y1="276.00" x2="247.40" y2="607.50" stroke="#9c9c9c" stroke-width="1.2"/>
<line x1="290.80" y1="276.00" x2="290.80" y2="607.50" stroke="#9c9c9c" stroke-width="1.2"/>
<line x1="335.80" y1="276.00" x2="335.80" y2="607.50" stroke="#9c9c9c" stroke-width="1.2"/>
<rect x="24.2" y="277.5" width="85.2" height="6.4" fill="#000"/>
<rect x="24.9" y="278.1" width="83.8" height="4.9" fill="url(#bg0)"/>
<rect x="24.2" y="287.9" width="90.8" height="6.4" fill="#000"/>
<rect x="24.9" y="288.4" width="89.4" height="4.9" fill="url(#bg1)"/>
<rect x="24.2" y="298.9" width="89.0" height="6.4" fill="#000"/>
<rect x="24.9" y="299.4" width="87.6" height="4.9" fill="url(#bg2)"/>
<rect x="24.2" y="309.7" width="97.1" height="6.4" fill="#000"/>
<rect x="24.9" y="310.2" width="95.7" height="4.9" fill="url(#bg3)"/>
<rect x="24.2" y="320.7" width="47.3" height="6.4" fill="#000"/>
<rect x="24.9" y="321.2" width="45.9" height="4.9" fill="url(#bg4)"/>
<rect x="24.2" y="331.7" width="77.4" height="6.4" fill="#000"/>
<rect x="24.9" y="332.2" width="76.0" height="4.9" fill="url(#bg5)"/>
<rect x="24.2" y="343.9" width="91.9" height="6.4" fill="#000"/>
<rect x="24.9" y="344.4" width="90.5" height="4.9" fill="url(#bg6)"/>
<rect x="24.2" y="354.8" width="138.1" height="6.4" fill="#000"/>
<rect x="24.9" y="355.4" width="136.7" height="4.9" fill="url(#bg7)"/>
<rect x="24.2" y="365.6" width="165.1" height="6.4" fill="#000"/>
<rect x="24.9" y="366.2" width="163.7" height="4.9" fill="url(#bg8)"/>
<rect x="24.2" y="376.6" width="88.1" height="6.4" fill="#000"/>
<rect x="24.9" y="377.2" width="86.7" height="4.9" fill="url(#bg9)"/>
<rect x="24.2" y="387.4" width="71.2" height="6.4" fill="#000"/>
<rect x="24.9" y="387.9" width="69.8" height="4.9" fill="url(#bg10)"/>
<rect x="24.2" y="397.9" width="63.4" height="6.4" fill="#000"/>
<rect x="24.9" y="398.4" width="62.0" height="4.9" fill="url(#bg11)"/>
<rect x="24.2" y="408.9" width="223.5" height="6.4" fill="#000"/>
<rect x="24.9" y="409.4" width="222.1" height="4.9" fill="url(#bg12)"/>
<rect x="24.2" y="419.6" width="64.5" height="6.4" fill="#000"/>
<rect x="24.9" y="420.2" width="63.1" height="4.9" fill="url(#bg13)"/>
<rect x="24.2" y="432.3" width="69.9" height="6.4" fill="#000"/>
<rect x="24.9" y="432.9" width="68.5" height="4.9" fill="url(#bg14)"/>
<rect x="24.2" y="443.0" width="162.4" height="6.4" fill="#000"/>
<rect x="24.9" y="443.6" width="161.0" height="4.9" fill="url(#bg15)"/>
<rect x="24.2" y="453.7" width="99.3" height="6.4" fill="#000"/>
<rect x="24.9" y="454.2" width="97.9" height="4.9" fill="url(#bg16)"/>
<rect x="24.2" y="464.7" width="242.0" height="6.4" fill="#000"/>
<rect x="24.9" y="465.2" width="240.6" height="4.9" fill="url(#bg17)"/>
<rect x="24.2" y="475.8" width="118.9" height="6.4" fill="#000"/>
<rect x="24.9" y="476.4" width="117.5" height="4.9" fill="url(#bg18)"/>
<rect x="24.2" y="486.5" width="112.4" height="6.4" fill="#000"/>
<rect x="24.9" y="487.1" width="111.0" height="4.9" fill="url(#bg19)"/>
<rect x="24.2" y="497.6" width="63.4" height="6.4" fill="#000"/>
<rect x="24.9" y="498.2" width="62.0" height="4.9" fill="url(#bg20)"/>
<rect x="24.2" y="508.7" width="100.4" height="6.4" fill="#000"/>
<rect x="24.9" y="509.2" width="99.0" height="4.9" fill="url(#bg21)"/>
<rect x="24.2" y="521.0" width="200.1" height="6.4" fill="#000"/>
<rect x="24.9" y="521.5" width="198.7" height="4.9" fill="url(#bg22)"/>
<rect x="24.2" y="532.0" width="122.0" height="6.4" fill="#000"/>
<rect x="24.9" y="532.5" width="120.6" height="4.9" fill="url(#bg23)"/>
<rect x="24.2" y="542.7" width="18.3" height="6.4" fill="#000"/>
<rect x="24.9" y="543.2" width="16.9" height="4.9" fill="url(#bg24)"/>
<rect x="24.2" y="553.8" width="128.9" height="6.4" fill="#000"/>
<rect x="24.9" y="554.3" width="127.5" height="4.9" fill="url(#bg25)"/>
<rect x="24.2" y="564.5" width="138.8" height="6.4" fill="#000"/>
<rect x="24.9" y="565.0" width="137.4" height="4.9" fill="url(#bg26)"/>
<rect x="24.2" y="575.2" width="144.6" height="6.4" fill="#000"/>
<rect x="24.9" y="575.8" width="143.2" height="4.9" fill="url(#bg27)"/>
<rect x="24.2" y="586.3" width="150.1" height="6.4" fill="#000"/>
<rect x="24.9" y="586.8" width="148.7" height="4.9" fill="url(#bg28)"/>
<rect x="24.2" y="597.0" width="149.9" height="6.4" fill="#000"/>
<rect x="24.9" y="597.5" width="148.5" height="4.9" fill="url(#bg29)"/>
<rect x="24.00" y="276.00" width="335.30" height="331.50" fill="none" stroke="#a8a8a8" stroke-width="1.3"/>
<line x1="24.00" y1="607.50" x2="24.00" y2="611.50" stroke="#aaa" stroke-width="1.4"/>
<text x="24.0" y="629.5" font-size="14.5" fill="#ddd" text-anchor="middle">0</text>
<line x1="68.60" y1="607.50" x2="68.60" y2="611.50" stroke="#aaa" stroke-width="1.4"/>
<text x="68.6" y="629.5" font-size="14.5" fill="#ddd" text-anchor="middle">2</text>
<line x1="113.20" y1="607.50" x2="113.20" y2="611.50" stroke="#aaa" stroke-width="1.4"/>
<text x="113.2" y="629.5" font-size="14.5" fill="#ddd" text-anchor="middle">4</text>
<line x1="157.80" y1="607.50" x2="157.80" y2="611.50" stroke="#aaa" stroke-width="1.4"/>
<text x="157.8" y="629.5" font-size="14.5" fill="#ddd" text-anchor="middle">6</text>
<line x1="202.40" y1="607.50" x2="202.40" y2="611.50" stroke="#aaa" stroke-width="1.4"/>
<text x="202.4" y="629.5" font-size="14.5" fill="#ddd" text-anchor="middle">8</text>
<line x1="247.00" y1="607.50" x2="247.00" y2="611.50" stroke="#aaa" stroke-width="1.4"/>
<text x="247.0" y="629.5" font-size="14.5" fill="#ddd" text-anchor="middle">10</text>
<line x1="291.60" y1="607.50" x2="291.60" y2="611.50" stroke="#aaa" stroke-width="1.4"/>
<text x="291.6" y="629.5" font-size="14.5" fill="#ddd" text-anchor="middle">12</text>
<line x1="336.20" y1="607.50" x2="336.20" y2="611.50" stroke="#aaa" stroke-width="1.4"/>
<text x="336.2" y="629.5" font-size="14.5" fill="#ddd" text-anchor="middle">14</text>
<text x="151.7" y="270.0" font-size="14.2" fill="#ddd" textLength="79.0" lengthAdjust="spacingAndGlyphs">DeltaE 2000</text>
<rect x="403.60" y="125.90" width="152.70" height="336.00" fill="#262626"/>
<line x1="399.10" y1="125.90" x2="403.60" y2="125.90" stroke="#e0e0e0" stroke-width="1.5"/>
<text x="398.0" y="131.7" font-size="14" fill="#ddd" text-anchor="end">4</text>
<line x1="403.60" y1="167.90" x2="556.30" y2="167.90" stroke="#9c9c9c" stroke-width="1.15"/>
<line x1="399.10" y1="167.90" x2="403.60" y2="167.90" stroke="#e0e0e0" stroke-width="1.5"/>
<text x="398.0" y="173.7" font-size="14" fill="#ddd" text-anchor="end">3</text>
<line x1="403.60" y1="209.90" x2="556.30" y2="209.90" stroke="#9c9c9c" stroke-width="1.15"/>
<line x1="399.10" y1="209.90" x2="403.60" y2="209.90" stroke="#e0e0e0" stroke-width="1.5"/>
<text x="398.0" y="215.7" font-size="14" fill="#ddd" text-anchor="end">2</text>
<line x1="403.60" y1="251.90" x2="556.30" y2="251.90" stroke="#9c9c9c" stroke-width="1.15"/>
<line x1="399.10" y1="251.90" x2="403.60" y2="251.90" stroke="#e0e0e0" stroke-width="1.5"/>
<text x="398.0" y="257.7" font-size="14" fill="#ddd" text-anchor="end">1</text>
<line x1="403.60" y1="293.90" x2="556.30" y2="293.90" stroke="#9c9c9c" stroke-width="1.15"/>
<line x1="399.10" y1="293.90" x2="403.60" y2="293.90" stroke="#e0e0e0" stroke-width="1.5"/>
<text x="398.0" y="299.7" font-size="14" fill="#ddd" text-anchor="end">0</text>
<line x1="403.60" y1="335.90" x2="556.30" y2="335.90" stroke="#9c9c9c" stroke-width="1.15"/>
<line x1="399.10" y1="335.90" x2="403.60" y2="335.90" stroke="#e0e0e0" stroke-width="1.5"/>
<text x="398.0" y="341.7" font-size="14" fill="#ddd" text-anchor="end">-1</text>
<line x1="403.60" y1="377.90" x2="556.30" y2="377.90" stroke="#9c9c9c" stroke-width="1.15"/>
<line x1="399.10" y1="377.90" x2="403.60" y2="377.90" stroke="#e0e0e0" stroke-width="1.5"/>
<text x="398.0" y="383.7" font-size="14" fill="#ddd" text-anchor="end">-2</text>
<line x1="403.60" y1="419.90" x2="556.30" y2="419.90" stroke="#9c9c9c" stroke-width="1.15"/>
<line x1="399.10" y1="419.90" x2="403.60" y2="419.90" stroke="#e0e0e0" stroke-width="1.5"/>
<text x="398.0" y="425.7" font-size="14" fill="#ddd" text-anchor="end">-3</text>
<line x1="399.10" y1="461.90" x2="403.60" y2="461.90" stroke="#e0e0e0" stroke-width="1.5"/>
<text x="398.0" y="467.7" font-size="14" fill="#ddd" text-anchor="end">-4</text>
<rect x="418.10" y="291.30" width="121.90" height="3.60" fill="#000"/>
<rect x="419.30" y="292.45" width="119.50" height="1.45" fill="#d0d05a"/>
<rect x="403.60" y="125.90" width="152.70" height="336.00" fill="none" stroke="#a8a8a8" stroke-width="1.25"/>
<text x="447.5" y="121.0" font-size="14.2" fill="#ddd" textLength="46.0" lengthAdjust="spacingAndGlyphs">Delta L</text>
<rect x="608.40" y="125.90" width="144.70" height="336.00" fill="#262626"/>
<line x1="603.90" y1="125.90" x2="608.40" y2="125.90" stroke="#e0e0e0" stroke-width="1.5"/>
<text x="602.8" y="131.7" font-size="14" fill="#ddd" text-anchor="end">10</text>
<line x1="608.40" y1="209.90" x2="753.10" y2="209.90" stroke="#9c9c9c" stroke-width="1.15"/>
<line x1="603.90" y1="209.90" x2="608.40" y2="209.90" stroke="#e0e0e0" stroke-width="1.5"/>
<text x="602.8" y="215.7" font-size="14" fill="#ddd" text-anchor="end">5</text>
<line x1="608.40" y1="293.90" x2="753.10" y2="293.90" stroke="#9c9c9c" stroke-width="1.15"/>
<line x1="603.90" y1="293.90" x2="608.40" y2="293.90" stroke="#e0e0e0" stroke-width="1.5"/>
<text x="602.8" y="299.7" font-size="14" fill="#ddd" text-anchor="end">0</text>
<line x1="608.40" y1="377.90" x2="753.10" y2="377.90" stroke="#9c9c9c" stroke-width="1.15"/>
<line x1="603.90" y1="377.90" x2="608.40" y2="377.90" stroke="#e0e0e0" stroke-width="1.5"/>
<text x="602.8" y="383.7" font-size="14" fill="#ddd" text-anchor="end">-5</text>
<line x1="603.90" y1="461.90" x2="608.40" y2="461.90" stroke="#e0e0e0" stroke-width="1.5"/>
<text x="602.8" y="467.7" font-size="14" fill="#ddd" text-anchor="end">-10</text>
<rect x="623.5" y="150.6" width="114.9" height="143.3" fill="url(#yg)" stroke="#000" stroke-width="1.2"/>
<rect x="608.40" y="125.90" width="144.70" height="336.00" fill="none" stroke="#a8a8a8" stroke-width="1.25"/>
<text x="644.0" y="121.0" font-size="14.2" fill="#ddd" textLength="48.0" lengthAdjust="spacingAndGlyphs">Delta C</text>
<rect x="798.20" y="125.90" width="153.20" height="336.00" fill="#262626"/>
<line x1="793.70" y1="125.90" x2="798.20" y2="125.90" stroke="#e0e0e0" stroke-width="1.5"/>
<text x="792.6" y="131.7" font-size="14" fill="#ddd" text-anchor="end">8</text>
<line x1="798.20" y1="167.90" x2="951.40" y2="167.90" stroke="#9c9c9c" stroke-width="1.15"/>
<line x1="793.70" y1="167.90" x2="798.20" y2="167.90" stroke="#e0e0e0" stroke-width="1.5"/>
<text x="792.6" y="173.7" font-size="14" fill="#ddd" text-anchor="end">6</text>
<line x1="798.20" y1="209.90" x2="951.40" y2="209.90" stroke="#9c9c9c" stroke-width="1.15"/>
<line x1="793.70" y1="209.90" x2="798.20" y2="209.90" stroke="#e0e0e0" stroke-width="1.5"/>
<text x="792.6" y="215.7" font-size="14" fill="#ddd" text-anchor="end">4</text>
<line x1="798.20" y1="251.90" x2="951.40" y2="251.90" stroke="#9c9c9c" stroke-width="1.15"/>
<line x1="793.70" y1="251.90" x2="798.20" y2="251.90" stroke="#e0e0e0" stroke-width="1.5"/>
<text x="792.6" y="257.7" font-size="14" fill="#ddd" text-anchor="end">2</text>
<line x1="798.20" y1="293.90" x2="951.40" y2="293.90" stroke="#9c9c9c" stroke-width="1.15"/>
<line x1="793.70" y1="293.90" x2="798.20" y2="293.90" stroke="#e0e0e0" stroke-width="1.5"/>
<text x="792.6" y="299.7" font-size="14" fill="#ddd" text-anchor="end">0</text>
<line x1="798.20" y1="335.90" x2="951.40" y2="335.90" stroke="#9c9c9c" stroke-width="1.15"/>
<line x1="793.70" y1="335.90" x2="798.20" y2="335.90" stroke="#e0e0e0" stroke-width="1.5"/>
<text x="792.6" y="341.7" font-size="14" fill="#ddd" text-anchor="end">-2</text>
<line x1="798.20" y1="377.90" x2="951.40" y2="377.90" stroke="#9c9c9c" stroke-width="1.15"/>
<line x1="793.70" y1="377.90" x2="798.20" y2="377.90" stroke="#e0e0e0" stroke-width="1.5"/>
<text x="792.6" y="383.7" font-size="14" fill="#ddd" text-anchor="end">-4</text>
<line x1="798.20" y1="419.90" x2="951.40" y2="419.90" stroke="#9c9c9c" stroke-width="1.15"/>
<line x1="793.70" y1="419.90" x2="798.20" y2="419.90" stroke="#e0e0e0" stroke-width="1.5"/>
<text x="792.6" y="425.7" font-size="14" fill="#ddd" text-anchor="end">-6</text>
<line x1="793.70" y1="461.90" x2="798.20" y2="461.90" stroke="#e0e0e0" stroke-width="1.5"/>
<text x="792.6" y="467.7" font-size="14" fill="#ddd" text-anchor="end">-8</text>
<rect x="812.5" y="132.4" width="121.9" height="161.5" fill="url(#yg)" stroke="#000" stroke-width="1.2"/>
<rect x="798.20" y="125.90" width="153.20" height="336.00" fill="none" stroke="#a8a8a8" stroke-width="1.25"/>
<text x="841.0" y="121.0" font-size="14.2" fill="#ddd" textLength="48.5" lengthAdjust="spacingAndGlyphs">Delta H</text>
<text transform="translate(425.3,613.5) scale(0.95,1)" font-size="12.6" fill="#eee" text-anchor="middle">White</text>
<text transform="translate(493.2,613.5) scale(0.95,1)" font-size="12.6" fill="#eee" text-anchor="middle">Gray 80</text>
<text transform="translate(561.2,613.5) scale(0.95,1)" font-size="12.6" fill="#eee" text-anchor="middle">Gray 65</text>
<text transform="translate(629.2,613.5) scale(0.95,1)" font-size="12.6" fill="#eee" text-anchor="middle">Gray 50</text>
<text transform="translate(697.1,613.5) scale(0.95,1)" font-size="12.6" fill="#eee" text-anchor="middle">Gray 35</text>
<text transform="translate(765.0,613.5) scale(0.95,1)" font-size="12.6" fill="#eee" text-anchor="middle">Black</text>
<text transform="translate(833.0,613.5) scale(0.95,1)" font-size="12.6" fill="#eee" text-anchor="middle">Dark Skin</text>
<text transform="translate(901.0,613.5) scale(0.95,1)" font-size="12.6" fill="#eee" text-anchor="middle">Light Skin</text>
<text x="946.5" y="613.5" font-size="12.6" fill="#eee" textLength="24.5" lengthAdjust="spacingAndGlyphs">Blue</text>
<text transform="translate(392,525) rotate(-90)" font-size="12" font-weight="700" fill="#eee" textLength="34.8" lengthAdjust="spacingAndGlyphs">Actual</text>
<text transform="translate(392,590.6) rotate(-90)" font-size="12" font-weight="700" fill="#eee" textLength="34.8" lengthAdjust="spacingAndGlyphs">Target</text>
<path d="M383.8 644.4l5-5v10z" fill="#383838"/><path d="M966.5 644.4l-5-5v10z" fill="#383838"/>
<svg x="1023" y="125" width="639" height="491" viewBox="1023 125 639 491" overflow="hidden">
<path fill-rule="evenodd" fill="#000" fill-opacity="0.4" d="M1295.9 602.5L1295.7 602.5L1295.5 602.8L1295.1 602.8L1294.7 603.1L1294.2 603.1L1293.5 603.1L1292.6 603.1L1291.0 602.3L1288.2 600.4L1287.1 599.6L1285.9 598.7L1284.5 597.6L1282.9 596.3L1281.1 594.8L1279.1 593.2L1277.0 591.5L1274.8 589.5L1272.3 587.4L1269.7 585.3L1266.9 582.9L1263.8 580.3L1260.3 577.5L1256.5 574.4L1252.5 571.1L1248.3 567.6L1243.8 563.9L1239.0 559.8L1235.9 557.1L1232.7 554.3L1229.4 551.4L1225.9 548.2L1222.3 544.8L1218.6 541.3L1214.9 537.6L1211.0 533.7L1206.8 529.4L1202.3 524.5L1197.5 519.0L1192.4 513.1L1187.1 506.7L1181.6 499.8L1175.8 492.5L1169.9 484.7L1163.8 476.4L1157.5 467.6L1151.1 458.4L1144.5 448.8L1137.9 438.7L1131.1 428.0L1124.2 417.0L1117.3 405.8L1110.6 394.4L1103.9 382.9L1097.1 371.1L1090.4 359.2L1084.0 347.3L1077.9 335.6L1072.2 324.0L1066.8 312.4L1061.7 301.0L1056.9 289.8L1052.4 279.1L1048.3 268.9L1044.5 258.9L1041.0 249.3L1037.9 240.1L1035.1 231.5L1032.6 223.5L1030.5 216.0L1028.8 208.9L1027.3 202.3L1026.1 196.2L1025.1 190.4L1024.5 185.2L1024.1 180.3L1023.9 175.8L1023.9 171.5L1024.2 167.5L1024.7 163.9L1025.4 160.6L1026.3 157.5L1027.3 154.6L1029.6 150.4L1032.3 146.8L1035.5 143.9L1039.0 141.5L1042.9 139.7L1047.0 138.4L1051.4 137.4L1056.0 136.8L1060.7 136.3L1065.6 136.0L1070.7 135.9L1075.7 135.8L1080.7 135.8L1085.8 135.9L1090.9 136.0L1096.1 136.2L1101.4 136.5L1106.8 136.8L1112.3 137.1L1118.0 137.5L1123.9 138.0L1129.9 138.5L1136.0 139.1L1142.4 139.7L1149.0 140.3L1155.8 141.0L1162.8 141.7L1167.2 142.2L1171.6 142.7L1176.1 143.1L1180.7 143.6L1185.5 144.2L1190.3 144.7L1195.2 145.2L1200.2 145.8L1205.3 146.4L1210.5 147.0L1215.8 147.5L1221.2 148.2L1226.8 148.8L1232.4 149.4L1238.2 150.1L1244.0 150.7L1250.0 151.4L1256.1 152.1L1262.3 152.8L1268.6 153.6L1275.0 154.3L1281.6 155.0L1288.2 155.8L1294.9 156.6L1301.8 157.4L1308.8 158.2L1315.8 159.0L1323.0 159.8L1330.3 160.7L1337.6 161.5L1345.0 162.3L1352.5 163.2L1360.2 164.1L1367.8 165.0L1375.5 165.8L1383.2 166.7L1391.0 167.6L1398.9 168.5L1406.7 169.4L1414.4 170.3L1422.0 171.2L1429.6 172.1L1437.1 172.9L1444.6 173.8L1452.1 174.7L1459.6 175.5L1467.0 176.4L1474.4 177.2L1481.7 178.1L1488.8 178.9L1495.7 179.7L1502.5 180.4L1509.2 181.2L1515.7 181.9L1522.1 182.7L1528.3 183.4L1534.3 184.1L1540.2 184.7L1545.9 185.4L1551.5 186.0L1556.8 186.7L1562.0 187.3L1567.0 187.8L1571.8 188.4L1576.5 188.9L1583.9 189.8L1590.8 190.6L1597.4 191.3L1603.6 192.0L1609.5 192.7L1615.1 193.4L1620.4 194.0L1625.5 194.6L1630.4 195.1L1635.0 195.6L1639.3 196.1L1643.3 196.6L1647.1 197.0L1650.6 197.4L1653.8 197.8L1656.8 198.1L1659.4 198.4L1661.9 198.7L1664.2 199.0L1666.3 199.2L1668.3 199.5L1670.0 199.7L1671.6 199.8L1673.0 200.0L1676.1 200.4L1678.6 200.6L1680.6 200.9L1682.6 201.1L1684.3 201.3L1685.5 201.4L1686.0 201.5L1686.3 201.5ZM1502.4 188.1L1155.5 155.7L1209.2 486.9Z"/>
<path fill="none" stroke="#262626" stroke-width="1.6" stroke-linejoin="round" d="M1295.9 602.5L1295.7 602.5L1295.5 602.8L1295.1 602.8L1294.7 603.1L1294.2 603.1L1293.5 603.1L1292.6 603.1L1291.0 602.3L1288.2 600.4L1287.1 599.6L1285.9 598.7L1284.5 597.6L1282.9 596.3L1281.1 594.8L1279.1 593.2L1277.0 591.5L1274.8 589.5L1272.3 587.4L1269.7 585.3L1266.9 582.9L1263.8 580.3L1260.3 577.5L1256.5 574.4L1252.5 571.1L1248.3 567.6L1243.8 563.9L1239.0 559.8L1235.9 557.1L1232.7 554.3L1229.4 551.4L1225.9 548.2L1222.3 544.8L1218.6 541.3L1214.9 537.6L1211.0 533.7L1206.8 529.4L1202.3 524.5L1197.5 519.0L1192.4 513.1L1187.1 506.7L1181.6 499.8L1175.8 492.5L1169.9 484.7L1163.8 476.4L1157.5 467.6L1151.1 458.4L1144.5 448.8L1137.9 438.7L1131.1 428.0L1124.2 417.0L1117.3 405.8L1110.6 394.4L1103.9 382.9L1097.1 371.1L1090.4 359.2L1084.0 347.3L1077.9 335.6L1072.2 324.0L1066.8 312.4L1061.7 301.0L1056.9 289.8L1052.4 279.1L1048.3 268.9L1044.5 258.9L1041.0 249.3L1037.9 240.1L1035.1 231.5L1032.6 223.5L1030.5 216.0L1028.8 208.9L1027.3 202.3L1026.1 196.2L1025.1 190.4L1024.5 185.2L1024.1 180.3L1023.9 175.8L1023.9 171.5L1024.2 167.5L1024.7 163.9L1025.4 160.6L1026.3 157.5L1027.3 154.6L1029.6 150.4L1032.3 146.8L1035.5 143.9L1039.0 141.5L1042.9 139.7L1047.0 138.4L1051.4 137.4L1056.0 136.8L1060.7 136.3L1065.6 136.0L1070.7 135.9L1075.7 135.8L1080.7 135.8L1085.8 135.9L1090.9 136.0L1096.1 136.2L1101.4 136.5L1106.8 136.8L1112.3 137.1L1118.0 137.5L1123.9 138.0L1129.9 138.5L1136.0 139.1L1142.4 139.7L1149.0 140.3L1155.8 141.0L1162.8 141.7L1167.2 142.2L1171.6 142.7L1176.1 143.1L1180.7 143.6L1185.5 144.2L1190.3 144.7L1195.2 145.2L1200.2 145.8L1205.3 146.4L1210.5 147.0L1215.8 147.5L1221.2 148.2L1226.8 148.8L1232.4 149.4L1238.2 150.1L1244.0 150.7L1250.0 151.4L1256.1 152.1L1262.3 152.8L1268.6 153.6L1275.0 154.3L1281.6 155.0L1288.2 155.8L1294.9 156.6L1301.8 157.4L1308.8 158.2L1315.8 159.0L1323.0 159.8L1330.3 160.7L1337.6 161.5L1345.0 162.3L1352.5 163.2L1360.2 164.1L1367.8 165.0L1375.5 165.8L1383.2 166.7L1391.0 167.6L1398.9 168.5L1406.7 169.4L1414.4 170.3L1422.0 171.2L1429.6 172.1L1437.1 172.9L1444.6 173.8L1452.1 174.7L1459.6 175.5L1467.0 176.4L1474.4 177.2L1481.7 178.1L1488.8 178.9L1495.7 179.7L1502.5 180.4L1509.2 181.2L1515.7 181.9L1522.1 182.7L1528.3 183.4L1534.3 184.1L1540.2 184.7L1545.9 185.4L1551.5 186.0L1556.8 186.7L1562.0 187.3L1567.0 187.8L1571.8 188.4L1576.5 188.9L1583.9 189.8L1590.8 190.6L1597.4 191.3L1603.6 192.0L1609.5 192.7L1615.1 193.4L1620.4 194.0L1625.5 194.6L1630.4 195.1L1635.0 195.6L1639.3 196.1L1643.3 196.6L1647.1 197.0L1650.6 197.4L1653.8 197.8L1656.8 198.1L1659.4 198.4L1661.9 198.7L1664.2 199.0L1666.3 199.2L1668.3 199.5L1670.0 199.7L1671.6 199.8L1673.0 200.0L1676.1 200.4L1678.6 200.6L1680.6 200.9L1682.6 201.1L1684.3 201.3L1685.5 201.4L1686.0 201.5L1686.3 201.5Z"/>
</svg>
<rect x="1022" y="124.9" width="640" height="491.6" fill="none" stroke="#b0b0b0" stroke-width="1.25"/>
<text x="1282.5" y="118.7" font-size="14.2" fill="#ddd" textLength="84.5" lengthAdjust="spacingAndGlyphs">CIE 1976 u&#39;v&#39;</text>
<line x1="1021.80" y1="616.50" x2="1021.80" y2="622.00" stroke="#ccc" stroke-width="1.4"/>
<text x="1021.8" y="637.5" font-size="14.5" fill="#ddd" text-anchor="middle">0</text>
<line x1="1016.50" y1="616.60" x2="1022.00" y2="616.60" stroke="#ccc" stroke-width="1.4"/>
<text x="1015.5" y="623.0" font-size="14.5" fill="#ddd" text-anchor="end">0</text>
<line x1="1075.05" y1="616.50" x2="1075.05" y2="622.00" stroke="#ccc" stroke-width="1.4"/>
<text x="1075.0" y="637.5" font-size="14.5" fill="#ddd" text-anchor="middle">0,05</text>
<line x1="1016.50" y1="575.68" x2="1022.00" y2="575.68" stroke="#ccc" stroke-width="1.4"/>
<text x="1015.5" y="582.1" font-size="14.5" fill="#ddd" text-anchor="end">0,05</text>
<line x1="1128.30" y1="616.50" x2="1128.30" y2="622.00" stroke="#ccc" stroke-width="1.4"/>
<text x="1128.3" y="637.5" font-size="14.5" fill="#ddd" text-anchor="middle">0,1</text>
<line x1="1016.50" y1="534.76" x2="1022.00" y2="534.76" stroke="#ccc" stroke-width="1.4"/>
<text x="1015.5" y="541.2" font-size="14.5" fill="#ddd" text-anchor="end">0,1</text>
<line x1="1181.55" y1="616.50" x2="1181.55" y2="622.00" stroke="#ccc" stroke-width="1.4"/>
<text x="1181.5" y="637.5" font-size="14.5" fill="#ddd" text-anchor="middle">0,15</text>
<line x1="1016.50" y1="493.84" x2="1022.00" y2="493.84" stroke="#ccc" stroke-width="1.4"/>
<text x="1015.5" y="500.2" font-size="14.5" fill="#ddd" text-anchor="end">0,15</text>
<line x1="1234.80" y1="616.50" x2="1234.80" y2="622.00" stroke="#ccc" stroke-width="1.4"/>
<text x="1234.8" y="637.5" font-size="14.5" fill="#ddd" text-anchor="middle">0,2</text>
<line x1="1016.50" y1="452.92" x2="1022.00" y2="452.92" stroke="#ccc" stroke-width="1.4"/>
<text x="1015.5" y="459.3" font-size="14.5" fill="#ddd" text-anchor="end">0,2</text>
<line x1="1288.05" y1="616.50" x2="1288.05" y2="622.00" stroke="#ccc" stroke-width="1.4"/>
<text x="1288.0" y="637.5" font-size="14.5" fill="#ddd" text-anchor="middle">0,25</text>
<line x1="1016.50" y1="412.00" x2="1022.00" y2="412.00" stroke="#ccc" stroke-width="1.4"/>
<text x="1015.5" y="418.4" font-size="14.5" fill="#ddd" text-anchor="end">0,25</text>
<line x1="1341.30" y1="616.50" x2="1341.30" y2="622.00" stroke="#ccc" stroke-width="1.4"/>
<text x="1341.3" y="637.5" font-size="14.5" fill="#ddd" text-anchor="middle">0,3</text>
<line x1="1016.50" y1="371.08" x2="1022.00" y2="371.08" stroke="#ccc" stroke-width="1.4"/>
<text x="1015.5" y="377.5" font-size="14.5" fill="#ddd" text-anchor="end">0,3</text>
<line x1="1394.55" y1="616.50" x2="1394.55" y2="622.00" stroke="#ccc" stroke-width="1.4"/>
<text x="1394.5" y="637.5" font-size="14.5" fill="#ddd" text-anchor="middle">0,35</text>
<line x1="1016.50" y1="330.16" x2="1022.00" y2="330.16" stroke="#ccc" stroke-width="1.4"/>
<text x="1015.5" y="336.6" font-size="14.5" fill="#ddd" text-anchor="end">0,35</text>
<line x1="1447.80" y1="616.50" x2="1447.80" y2="622.00" stroke="#ccc" stroke-width="1.4"/>
<text x="1447.8" y="637.5" font-size="14.5" fill="#ddd" text-anchor="middle">0,4</text>
<line x1="1016.50" y1="289.24" x2="1022.00" y2="289.24" stroke="#ccc" stroke-width="1.4"/>
<text x="1015.5" y="295.6" font-size="14.5" fill="#ddd" text-anchor="end">0,4</text>
<line x1="1501.05" y1="616.50" x2="1501.05" y2="622.00" stroke="#ccc" stroke-width="1.4"/>
<text x="1501.0" y="637.5" font-size="14.5" fill="#ddd" text-anchor="middle">0,45</text>
<line x1="1016.50" y1="248.32" x2="1022.00" y2="248.32" stroke="#ccc" stroke-width="1.4"/>
<text x="1015.5" y="254.7" font-size="14.5" fill="#ddd" text-anchor="end">0,45</text>
<line x1="1554.30" y1="616.50" x2="1554.30" y2="622.00" stroke="#ccc" stroke-width="1.4"/>
<text x="1554.3" y="637.5" font-size="14.5" fill="#ddd" text-anchor="middle">0,5</text>
<line x1="1016.50" y1="207.40" x2="1022.00" y2="207.40" stroke="#ccc" stroke-width="1.4"/>
<text x="1015.5" y="213.8" font-size="14.5" fill="#ddd" text-anchor="end">0,5</text>
<line x1="1607.55" y1="616.50" x2="1607.55" y2="622.00" stroke="#ccc" stroke-width="1.4"/>
<text x="1607.5" y="637.5" font-size="14.5" fill="#ddd" text-anchor="middle">0,55</text>
<line x1="1016.50" y1="166.48" x2="1022.00" y2="166.48" stroke="#ccc" stroke-width="1.4"/>
<text x="1015.5" y="172.9" font-size="14.5" fill="#ddd" text-anchor="end">0,55</text>
<rect x="1147.8" y="147.7" width="13.5" height="13.5" fill="none" stroke="rgba(255,255,255,0.93)" stroke-width="1.4"/>
<rect x="1171.7" y="171.7" width="13.5" height="13.5" fill="none" stroke="rgba(255,255,255,0.93)" stroke-width="1.4"/>
<rect x="1211.8" y="163.7" width="13.5" height="13.5" fill="none" stroke="rgba(255,255,255,0.93)" stroke-width="1.4"/>
<rect x="1231.8" y="155.7" width="13.5" height="13.5" fill="none" stroke="rgba(255,255,255,0.93)" stroke-width="1.4"/>
<rect x="1258.7" y="159.7" width="13.5" height="13.5" fill="none" stroke="rgba(255,255,255,0.93)" stroke-width="1.4"/>
<rect x="1290.8" y="166.7" width="13.5" height="13.5" fill="none" stroke="rgba(255,255,255,0.93)" stroke-width="1.4"/>
<rect x="1333.8" y="170.8" width="13.5" height="13.5" fill="none" stroke="rgba(255,255,255,0.93)" stroke-width="1.4"/>
<rect x="1209.0" y="185.7" width="13.5" height="13.5" fill="none" stroke="rgba(255,255,255,0.93)" stroke-width="1.4"/>
<rect x="1273.8" y="199.8" width="13.5" height="13.5" fill="none" stroke="rgba(255,255,255,0.93)" stroke-width="1.4"/>
<rect x="1262.8" y="205.6" width="13.5" height="13.5" fill="none" stroke="rgba(255,255,255,0.93)" stroke-width="1.4"/>
<rect x="1352.8" y="212.8" width="13.5" height="13.5" fill="none" stroke="rgba(255,255,255,0.93)" stroke-width="1.4"/>
<rect x="1178.8" y="216.8" width="13.5" height="13.5" fill="none" stroke="rgba(255,255,255,0.93)" stroke-width="1.4"/>
<rect x="1162.8" y="235.7" width="13.5" height="13.5" fill="none" stroke="rgba(255,255,255,0.93)" stroke-width="1.4"/>
<rect x="1320.2" y="258.6" width="13.5" height="13.5" fill="none" stroke="rgba(255,255,255,0.93)" stroke-width="1.4"/>
<rect x="1167.8" y="267.6" width="13.5" height="13.5" fill="none" stroke="rgba(255,255,255,0.93)" stroke-width="1.4"/>
<rect x="1201.8" y="264.6" width="13.5" height="13.5" fill="none" stroke="rgba(255,255,255,0.93)" stroke-width="1.4"/>
<rect x="1222.2" y="269.6" width="13.5" height="13.5" fill="none" stroke="rgba(255,255,255,0.93)" stroke-width="1.4"/>
<rect x="1257.8" y="287.6" width="13.5" height="13.5" fill="none" stroke="rgba(255,255,255,0.93)" stroke-width="1.4"/>
<rect x="1204.8" y="317.6" width="13.5" height="13.5" fill="none" stroke="rgba(255,255,255,0.93)" stroke-width="1.4"/>
<rect x="1204.8" y="367.6" width="13.5" height="13.5" fill="none" stroke="rgba(255,255,255,0.93)" stroke-width="1.4"/>
<rect x="1339.8" y="337.8" width="13.5" height="13.5" fill="none" stroke="rgba(255,255,255,0.93)" stroke-width="1.4"/>
<rect x="1413.8" y="200.7" width="13.5" height="13.5" fill="none" stroke="rgba(255,255,255,0.93)" stroke-width="1.4"/>
<rect x="1494.8" y="180.2" width="13.5" height="13.5" fill="none" stroke="rgba(255,255,255,0.93)" stroke-width="1.4"/>
<rect x="1201.8" y="479.6" width="13.5" height="13.5" fill="none" stroke="rgba(255,255,255,0.93)" stroke-width="1.4"/>
<rect x="1225.0" y="225.0" width="12.9" height="12.9" fill="none" stroke="#000" stroke-width="2.1"/>
<circle cx="1154.2" cy="150.0" r="4.0" fill="#00ff00" stroke="#000" stroke-width="1.2"/>
<circle cx="1177.7" cy="179.9" r="4.0" fill="#5a8c50" stroke="#000" stroke-width="1.2"/>
<circle cx="1211.6" cy="170.4" r="4.0" fill="#a0aa50" stroke="#000" stroke-width="1.2"/>
<circle cx="1227.5" cy="158.5" r="4.0" fill="#ffff00" stroke="#000" stroke-width="1.2"/>
<circle cx="1245.6" cy="162.5" r="4.0" fill="#e6be32" stroke="#000" stroke-width="1.2"/>
<circle cx="1266.9" cy="169.4" r="4.0" fill="#dca03c" stroke="#000" stroke-width="1.2"/>
<circle cx="1298.5" cy="173.4" r="4.0" fill="#c87832" stroke="#000" stroke-width="1.2"/>
<circle cx="1208.5" cy="192.4" r="4.0" fill="#5a6946" stroke="#000" stroke-width="1.2"/>
<circle cx="1263.1" cy="208.9" r="4.7" fill="#73554b" stroke="#000" stroke-width="1.2"/>
<circle cx="1246.5" cy="221.0" r="4.0" fill="#b99687" stroke="#000" stroke-width="1.2"/>
<circle cx="1314.9" cy="233.4" r="4.0" fill="#be5064" stroke="#000" stroke-width="1.2"/>
<circle cx="1189.5" cy="233.4" r="4.0" fill="#6eaa96" stroke="#000" stroke-width="1.2"/>
<circle cx="1225.1" cy="238.9" r="4.7" fill="#aaaaaa" stroke="#000" stroke-width="1.2"/>
<circle cx="1173.0" cy="248.5" r="4.0" fill="#00ffff" stroke="#000" stroke-width="1.2"/>
<circle cx="1233.0" cy="266.0" r="4.0" fill="#000000" stroke="#000" stroke-width="1.2"/>
<circle cx="1177.2" cy="276.7" r="4.0" fill="#1e8caa" stroke="#000" stroke-width="1.2"/>
<circle cx="1208.5" cy="271.4" r="4.0" fill="#647da5" stroke="#000" stroke-width="1.2"/>
<circle cx="1225.1" cy="276.7" r="4.0" fill="#8782b4" stroke="#000" stroke-width="1.2"/>
<circle cx="1295.5" cy="280.9" r="4.0" fill="#b45096" stroke="#000" stroke-width="1.2"/>
<circle cx="1260.5" cy="311.9" r="4.0" fill="#64466e" stroke="#000" stroke-width="1.2"/>
<circle cx="1210.0" cy="320.3" r="4.0" fill="#5a6eaa" stroke="#000" stroke-width="1.2"/>
<circle cx="1215.7" cy="388.3" r="4.0" fill="#3c468c" stroke="#000" stroke-width="1.2"/>
<circle cx="1334.1" cy="371.8" r="4.0" fill="#ff00ff" stroke="#000" stroke-width="1.2"/>
<circle cx="1398.0" cy="216.8" r="4.0" fill="#aa323c" stroke="#000" stroke-width="1.2"/>
<circle cx="1488.9" cy="188.4" r="4.0" fill="#ff0000" stroke="#500000" stroke-width="1.2"/>
<circle cx="1221.3" cy="505.6" r="4.0" fill="#0000ff" stroke="#000064" stroke-width="1.2"/>
<path d="M1458 445 L1655 445 L1655 560.5 L1458 457.4 Z" fill="#000" fill-opacity="0.4"/>
<rect x="1548.9" y="501.8" width="13.4" height="13.4" fill="none" stroke="#fff" stroke-width="1.6"/>
<circle cx="1517.1" cy="456.9" r="4.4" fill="#ffff14" stroke="#000" stroke-width="1.2"/>
<circle cx="1585.6" cy="526.4" r="4.0" fill="#e6be28" stroke="#000" stroke-width="1.2"/>
<text x="1407.0" y="606.4" font-size="19.5" fill="#eee" textLength="211.0" lengthAdjust="spacingAndGlyphs">RGB Triplet: 255, 255, 0</text>
<svg x="326" y="665" width="1341" height="230" viewBox="326 665 1341 230" overflow="hidden">
<text transform="translate(496.6,684.8) scale(1.385,1)" font-size="12.5" fill="#f4f4f4" stroke="#f4f4f4" stroke-width="0.25">White</text>
<text transform="translate(559.2,684.8) scale(1.385,1)" font-size="12.5" fill="#f4f4f4" stroke="#f4f4f4" stroke-width="0.25">Gray 80</text>
<text transform="translate(630.0,684.8) scale(1.385,1)" font-size="12.5" fill="#f4f4f4" stroke="#f4f4f4" stroke-width="0.25">Gray 65</text>
<text transform="translate(700.7,684.8) scale(1.385,1)" font-size="12.5" fill="#f4f4f4" stroke="#f4f4f4" stroke-width="0.25">Gray 50</text>
<text transform="translate(771.5,684.8) scale(1.385,1)" font-size="12.5" fill="#f4f4f4" stroke="#f4f4f4" stroke-width="0.25">Gray 35</text>
<text transform="translate(845.1,684.8) scale(1.385,1)" font-size="12.5" fill="#f4f4f4" stroke="#f4f4f4" stroke-width="0.25">Black</text>
<text transform="translate(898.8,684.8) scale(1.385,1)" font-size="12.5" fill="#f4f4f4" stroke="#f4f4f4" stroke-width="0.25">Dark Skin</text>
<text transform="translate(983.4,684.8) scale(1.385,1)" font-size="12.5" fill="#f4f4f4" stroke="#f4f4f4" stroke-width="0.25">Light Skin</text>
<text transform="translate(1068.8,684.8) scale(1.385,1)" font-size="12.5" fill="#f4f4f4" stroke="#f4f4f4" stroke-width="0.25">Blue Sky</text>
<text transform="translate(1145.5,684.8) scale(1.385,1)" font-size="12.5" fill="#f4f4f4" stroke="#f4f4f4" stroke-width="0.25">Foliage</text>
<text transform="translate(1212.0,684.8) scale(1.385,1)" font-size="12.5" fill="#f4f4f4" stroke="#f4f4f4" stroke-width="0.25">Blue Flower</text>
<text transform="translate(1315.6,684.8) scale(1.385,1)" font-size="12.5" fill="#f4f4f4" stroke="#f4f4f4" stroke-width="0.25">Bluish Green</text>
<text transform="translate(1426.1,684.8) scale(1.385,1)" font-size="12.5" fill="#f4f4f4" stroke="#f4f4f4" stroke-width="0.25">Orange</text>
<text transform="translate(1494.3,684.8) scale(1.385,1)" font-size="12.5" fill="#f4f4f4" stroke="#f4f4f4" stroke-width="0.25">Purplish Blue</text>
<text transform="translate(1608.1,684.8) scale(1.385,1)" font-size="12.5" fill="#f4f4f4" stroke="#f4f4f4" stroke-width="0.25">Moderate Red</text>
<text transform="translate(340.8,709.1) scale(1.310,1)" font-size="14.4" fill="#f4f4f4" font-weight="700">x: CIE31</text>
<text transform="translate(492.0,709.2) scale(1.210,1)" font-size="15" fill="#e4e4e4">0,30</text>
<text transform="translate(558.7,709.2) scale(1.210,1)" font-size="15" fill="#e4e4e4">0,30</text>
<text transform="translate(629.5,709.2) scale(1.210,1)" font-size="15" fill="#e4e4e4">0,30</text>
<text transform="translate(700.2,709.2) scale(1.210,1)" font-size="15" fill="#e4e4e4">0,30</text>
<text transform="translate(771.0,709.2) scale(1.210,1)" font-size="15" fill="#e4e4e4">0,30</text>
<text transform="translate(841.8,709.2) scale(1.210,1)" font-size="15" fill="#e4e4e4">0,28</text>
<text transform="translate(898.3,709.2) scale(1.210,1)" font-size="15" fill="#e4e4e4">0,38</text>
<text transform="translate(982.9,709.2) scale(1.210,1)" font-size="15" fill="#e4e4e4">0,34</text>
<text transform="translate(1068.3,709.2) scale(1.210,1)" font-size="15" fill="#e4e4e4">0,25</text>
<text transform="translate(1144.2,709.2) scale(1.210,1)" font-size="15" fill="#e4e4e4">0,33</text>
<text transform="translate(1211.5,709.2) scale(1.210,1)" font-size="15" fill="#e4e4e4">0,26</text>
<text transform="translate(1315.1,709.2) scale(1.210,1)" font-size="15" fill="#e4e4e4">0,26</text>
<text transform="translate(1425.6,709.2) scale(1.210,1)" font-size="15" fill="#e4e4e4">0,47</text>
<text transform="translate(1493.8,709.2) scale(1.210,1)" font-size="15" fill="#e4e4e4">0,22</text>
<text transform="translate(1607.6,709.2) scale(1.210,1)" font-size="15" fill="#e4e4e4">0,40</text>
<text transform="translate(340.8,732.4) scale(1.310,1)" font-size="14.4" fill="#f4f4f4" font-weight="700">y: CIE31</text>
<text transform="translate(492.0,732.5) scale(1.210,1)" font-size="15" fill="#e4e4e4">0,32</text>
<text transform="translate(558.7,732.5) scale(1.210,1)" font-size="15" fill="#e4e4e4">0,32</text>
<text transform="translate(629.5,732.5) scale(1.210,1)" font-size="15" fill="#e4e4e4">0,32</text>
<text transform="translate(700.2,732.5) scale(1.210,1)" font-size="15" fill="#e4e4e4">0,32</text>
<text transform="translate(771.0,732.5) scale(1.210,1)" font-size="15" fill="#e4e4e4">0,32</text>
<text transform="translate(841.8,732.5) scale(1.210,1)" font-size="15" fill="#e4e4e4">0,27</text>
<text transform="translate(898.3,732.5) scale(1.210,1)" font-size="15" fill="#e4e4e4">0,37</text>
<text transform="translate(982.9,732.5) scale(1.210,1)" font-size="15" fill="#e4e4e4">0,35</text>
<text transform="translate(1068.3,732.5) scale(1.210,1)" font-size="15" fill="#e4e4e4">0,26</text>
<text transform="translate(1144.2,732.5) scale(1.210,1)" font-size="15" fill="#e4e4e4">0,43</text>
<text transform="translate(1211.5,732.5) scale(1.210,1)" font-size="15" fill="#e4e4e4">0,25</text>
<text transform="translate(1315.1,732.5) scale(1.210,1)" font-size="15" fill="#e4e4e4">0,34</text>
<text transform="translate(1425.6,732.5) scale(1.210,1)" font-size="15" fill="#e4e4e4">0,44</text>
<text transform="translate(1493.8,732.5) scale(1.210,1)" font-size="15" fill="#e4e4e4">0,20</text>
<text transform="translate(1607.6,732.5) scale(1.210,1)" font-size="15" fill="#e4e4e4">0,30</text>
<text transform="translate(340.8,755.7) scale(1.310,1)" font-size="14.4" fill="#f4f4f4" font-weight="700">Y</text>
<text transform="translate(492.0,755.8) scale(1.210,1)" font-size="15" fill="#e4e4e4">516,46</text>
<text transform="translate(558.7,755.8) scale(1.210,1)" font-size="15" fill="#e4e4e4">410,67</text>
<text transform="translate(629.5,755.8) scale(1.210,1)" font-size="15" fill="#e4e4e4">339,30</text>
<text transform="translate(700.2,755.8) scale(1.210,1)" font-size="15" fill="#e4e4e4">268,64</text>
<text transform="translate(771.0,755.8) scale(1.210,1)" font-size="15" fill="#e4e4e4">190,86</text>
<text transform="translate(841.8,755.8) scale(1.210,1)" font-size="15" fill="#e4e4e4">0,36</text>
<text transform="translate(898.3,755.8) scale(1.210,1)" font-size="15" fill="#e4e4e4">56,83</text>
<text transform="translate(982.9,755.8) scale(1.210,1)" font-size="15" fill="#e4e4e4">206,47</text>
<text transform="translate(1068.3,755.8) scale(1.210,1)" font-size="15" fill="#e4e4e4">117,49</text>
<text transform="translate(1144.2,755.8) scale(1.210,1)" font-size="15" fill="#e4e4e4">73,67</text>
<text transform="translate(1211.5,755.8) scale(1.210,1)" font-size="15" fill="#e4e4e4">146,43</text>
<text transform="translate(1315.1,755.8) scale(1.210,1)" font-size="15" fill="#e4e4e4">237,31</text>
<text transform="translate(1425.6,755.8) scale(1.210,1)" font-size="15" fill="#e4e4e4">166,62</text>
<text transform="translate(1493.8,755.8) scale(1.210,1)" font-size="15" fill="#e4e4e4">76,99</text>
<text transform="translate(1607.6,755.8) scale(1.210,1)" font-size="15" fill="#e4e4e4">109,39</text>
<text transform="translate(340.8,778.9) scale(1.310,1)" font-size="14.4" fill="#f4f4f4" font-weight="700">Target x:CIE31</text>
<text transform="translate(492.0,779.0) scale(1.210,1)" font-size="15" fill="#e4e4e4">0,31</text>
<text transform="translate(558.7,779.0) scale(1.210,1)" font-size="15" fill="#e4e4e4">0,31</text>
<text transform="translate(629.5,779.0) scale(1.210,1)" font-size="15" fill="#e4e4e4">0,31</text>
<text transform="translate(700.2,779.0) scale(1.210,1)" font-size="15" fill="#e4e4e4">0,31</text>
<text transform="translate(771.0,779.0) scale(1.210,1)" font-size="15" fill="#e4e4e4">0,31</text>
<text transform="translate(841.8,779.0) scale(1.210,1)" font-size="15" fill="#e4e4e4">0,31</text>
<text transform="translate(898.3,779.0) scale(1.210,1)" font-size="15" fill="#e4e4e4">0,40</text>
<text transform="translate(982.9,779.0) scale(1.210,1)" font-size="15" fill="#e4e4e4">0,38</text>
<text transform="translate(1068.3,779.0) scale(1.210,1)" font-size="15" fill="#e4e4e4">0,25</text>
<text transform="translate(1144.2,779.0) scale(1.210,1)" font-size="15" fill="#e4e4e4">0,34</text>
<text transform="translate(1211.5,779.0) scale(1.210,1)" font-size="15" fill="#e4e4e4">0,27</text>
<text transform="translate(1315.1,779.0) scale(1.210,1)" font-size="15" fill="#e4e4e4">0,26</text>
<text transform="translate(1425.6,779.0) scale(1.210,1)" font-size="15" fill="#e4e4e4">0,51</text>
<text transform="translate(1493.8,779.0) scale(1.210,1)" font-size="15" fill="#e4e4e4">0,22</text>
<text transform="translate(1607.6,779.0) scale(1.210,1)" font-size="15" fill="#e4e4e4">0,46</text>
<text transform="translate(340.8,802.2) scale(1.310,1)" font-size="14.4" fill="#f4f4f4" font-weight="700">Target y:CIE31</text>
<text transform="translate(492.0,802.3) scale(1.210,1)" font-size="15" fill="#e4e4e4">0,33</text>
<text transform="translate(558.7,802.3) scale(1.210,1)" font-size="15" fill="#e4e4e4">0,33</text>
<text transform="translate(629.5,802.3) scale(1.210,1)" font-size="15" fill="#e4e4e4">0,33</text>
<text transform="translate(700.2,802.3) scale(1.210,1)" font-size="15" fill="#e4e4e4">0,33</text>
<text transform="translate(771.0,802.3) scale(1.210,1)" font-size="15" fill="#e4e4e4">0,33</text>
<text transform="translate(841.8,802.3) scale(1.210,1)" font-size="15" fill="#e4e4e4">0,33</text>
<text transform="translate(898.3,802.3) scale(1.210,1)" font-size="15" fill="#e4e4e4">0,36</text>
<text transform="translate(982.9,802.3) scale(1.210,1)" font-size="15" fill="#e4e4e4">0,36</text>
<text transform="translate(1068.3,802.3) scale(1.210,1)" font-size="15" fill="#e4e4e4">0,27</text>
<text transform="translate(1144.2,802.3) scale(1.210,1)" font-size="15" fill="#e4e4e4">0,43</text>
<text transform="translate(1211.5,802.3) scale(1.210,1)" font-size="15" fill="#e4e4e4">0,25</text>
<text transform="translate(1315.1,802.3) scale(1.210,1)" font-size="15" fill="#e4e4e4">0,36</text>
<text transform="translate(1425.6,802.3) scale(1.210,1)" font-size="15" fill="#e4e4e4">0,41</text>
<text transform="translate(1493.8,802.3) scale(1.210,1)" font-size="15" fill="#e4e4e4">0,19</text>
<text transform="translate(1607.6,802.3) scale(1.210,1)" font-size="15" fill="#e4e4e4">0,31</text>
<text transform="translate(340.8,825.5) scale(1.310,1)" font-size="14.4" fill="#f4f4f4" font-weight="700">Target Y</text>
<text transform="translate(492.0,825.6) scale(1.210,1)" font-size="15" fill="#e4e4e4">516,46</text>
<text transform="translate(558.7,825.6) scale(1.210,1)" font-size="15" fill="#e4e4e4">408,67</text>
<text transform="translate(629.5,825.6) scale(1.210,1)" font-size="15" fill="#e4e4e4">329,29</text>
<text transform="translate(700.2,825.6) scale(1.210,1)" font-size="15" fill="#e4e4e4">253,59</text>
<text transform="translate(771.0,825.6) scale(1.210,1)" font-size="15" fill="#e4e4e4">176,58</text>
<text transform="translate(841.8,825.6) scale(1.210,1)" font-size="15" fill="#e4e4e4">0,00</text>
<text transform="translate(898.3,825.6) scale(1.210,1)" font-size="15" fill="#e4e4e4">52,02</text>
<text transform="translate(982.9,825.6) scale(1.210,1)" font-size="15" fill="#e4e4e4">180,22</text>
<text transform="translate(1068.3,825.6) scale(1.210,1)" font-size="15" fill="#e4e4e4">96,57</text>
<text transform="translate(1144.2,825.6) scale(1.210,1)" font-size="15" fill="#e4e4e4">67,31</text>
<text transform="translate(1211.5,825.6) scale(1.210,1)" font-size="15" fill="#e4e4e4">120,43</text>
<text transform="translate(1315.1,825.6) scale(1.210,1)" font-size="15" fill="#e4e4e4">216,26</text>
<text transform="translate(1425.6,825.6) scale(1.210,1)" font-size="15" fill="#e4e4e4">146,40</text>
<text transform="translate(1493.8,825.6) scale(1.210,1)" font-size="15" fill="#e4e4e4">60,70</text>
<text transform="translate(1607.6,825.6) scale(1.210,1)" font-size="15" fill="#e4e4e4">96,45</text>
<text transform="translate(340.8,848.8) scale(1.310,1)" font-size="14.4" fill="#f4f4f4" font-weight="700">ΔE 2000</text>
<text transform="translate(492.0,848.9) scale(1.210,1)" font-size="15" fill="#e4e4e4">6,70</text>
<text transform="translate(558.7,848.9) scale(1.210,1)" font-size="15" fill="#e4e4e4">6,71</text>
<text transform="translate(629.5,848.9) scale(1.210,1)" font-size="15" fill="#e4e4e4">6,46</text>
<text transform="translate(700.2,848.9) scale(1.210,1)" font-size="15" fill="#e4e4e4">6,20</text>
<text transform="translate(771.0,848.9) scale(1.210,1)" font-size="15" fill="#e4e4e4">5,76</text>
<text transform="translate(841.8,848.9) scale(1.210,1)" font-size="15" fill="#e4e4e4">0,80</text>
<text transform="translate(898.3,848.9) scale(1.210,1)" font-size="15" fill="#e4e4e4">5,45</text>
<text transform="translate(982.9,848.9) scale(1.210,1)" font-size="15" fill="#e4e4e4">8,95</text>
<text transform="translate(1068.3,848.9) scale(1.210,1)" font-size="15" fill="#e4e4e4">4,48</text>
<text transform="translate(1144.2,848.9) scale(1.210,1)" font-size="15" fill="#e4e4e4">2,82</text>
<text transform="translate(1211.5,848.9) scale(1.210,1)" font-size="15" fill="#e4e4e4">5,02</text>
<text transform="translate(1315.1,848.9) scale(1.210,1)" font-size="15" fill="#e4e4e4">5,31</text>
<text transform="translate(1425.6,848.9) scale(1.210,1)" font-size="15" fill="#e4e4e4">10,83</text>
<text transform="translate(1493.8,848.9) scale(1.210,1)" font-size="15" fill="#e4e4e4">4,43</text>
<text transform="translate(1607.6,848.9) scale(1.210,1)" font-size="15" fill="#e4e4e4">7,26</text>
<text transform="translate(340.8,872.1) scale(1.310,1)" font-size="14.4" fill="#f4f4f4" font-weight="700">ΔE ITP</text>
<text transform="translate(492.0,872.2) scale(1.210,1)" font-size="15" fill="#e4e4e4">9,00</text>
<text transform="translate(558.7,872.2) scale(1.210,1)" font-size="15" fill="#e4e4e4">9,69</text>
<text transform="translate(629.5,872.2) scale(1.210,1)" font-size="15" fill="#e4e4e4">10,04</text>
<text transform="translate(700.2,872.2) scale(1.210,1)" font-size="15" fill="#e4e4e4">10,72</text>
<text transform="translate(771.0,872.2) scale(1.210,1)" font-size="15" fill="#e4e4e4">11,24</text>
<text transform="translate(841.8,872.2) scale(1.210,1)" font-size="15" fill="#e4e4e4">76,03</text>
<text transform="translate(898.3,872.2) scale(1.210,1)" font-size="15" fill="#e4e4e4">15,28</text>
<text transform="translate(982.9,872.2) scale(1.210,1)" font-size="15" fill="#e4e4e4">24,00</text>
<text transform="translate(1068.3,872.2) scale(1.210,1)" font-size="15" fill="#e4e4e4">14,31</text>
<text transform="translate(1144.2,872.2) scale(1.210,1)" font-size="15" fill="#e4e4e4">8,46</text>
<text transform="translate(1211.5,872.2) scale(1.210,1)" font-size="15" fill="#e4e4e4">15,05</text>
<text transform="translate(1315.1,872.2) scale(1.210,1)" font-size="15" fill="#e4e4e4">10,61</text>
<text transform="translate(1425.6,872.2) scale(1.210,1)" font-size="15" fill="#e4e4e4">31,97</text>
<text transform="translate(1493.8,872.2) scale(1.210,1)" font-size="15" fill="#e4e4e4">16,57</text>
<text transform="translate(1607.6,872.2) scale(1.210,1)" font-size="15" fill="#e4e4e4">37,69</text>
</svg>
<path d="M330 885.5l8-5v10z" fill="#333"/><path d="M1664 885.5l-8-5v10z" fill="#333"/>
<text transform="translate(-18.5,975.0) scale(1.000,1)" font-size="12.6" fill="#2c2c2c" font-weight="700">Blue</text>
<text transform="translate(-18.5,989.7) scale(1.000,1)" font-size="12.6" fill="#2c2c2c" font-weight="700">Flower</text>
<text transform="translate(47.5,975.0) scale(1.000,1)" font-size="12.6" fill="#2c2c2c" font-weight="700">Bluish</text>
<text transform="translate(47.5,989.7) scale(1.000,1)" font-size="12.6" fill="#2c2c2c" font-weight="700">Green</text>
<text transform="translate(131.8,989.7) scale(1.000,1)" font-size="12.6" fill="#2c2c2c" text-anchor="middle" font-weight="700">Orange</text>
<text transform="translate(171.6,975.0) scale(1.000,1)" font-size="12.6" fill="#2c2c2c" font-weight="700">Purplish</text>
<text transform="translate(171.6,989.7) scale(1.000,1)" font-size="12.6" fill="#2c2c2c" font-weight="700">Blue</text>
<text transform="translate(233.9,975.0) scale(1.000,1)" font-size="12.6" fill="#2c2c2c" font-weight="700">Moderate</text>
<text transform="translate(233.9,989.7) scale(1.000,1)" font-size="12.6" fill="#2c2c2c" font-weight="700">Red</text>
<text transform="translate(326.9,989.7) scale(1.000,1)" font-size="12.6" fill="#2c2c2c" text-anchor="middle" font-weight="700">Purple</text>
<text transform="translate(372.3,975.0) scale(1.000,1)" font-size="12.6" fill="#2c2c2c" font-weight="700">Yellow</text>
<text transform="translate(372.3,989.7) scale(1.000,1)" font-size="12.6" fill="#2c2c2c" font-weight="700">Green</text>
<text transform="translate(434.9,975.0) scale(1.000,1)" font-size="12.6" fill="#2c2c2c" font-weight="700">Orange</text>
<text transform="translate(434.9,989.7) scale(1.000,1)" font-size="12.6" fill="#2c2c2c" font-weight="700">Yellow</text>
<text transform="translate(521.9,989.7) scale(1.000,1)" font-size="12.6" fill="#2c2c2c" text-anchor="middle" font-weight="700">Blue</text>
<text transform="translate(587.0,989.7) scale(1.000,1)" font-size="12.6" fill="#2c2c2c" text-anchor="middle" font-weight="700">Green</text>
<text transform="translate(652.0,989.7) scale(1.000,1)" font-size="12.6" fill="#2c2c2c" text-anchor="middle" font-weight="700">Red</text>
<text transform="translate(717.0,989.7) scale(1.000,1)" font-size="12.6" fill="#2c2c2c" text-anchor="middle" font-weight="700">Yellow</text>
<text transform="translate(782.0,989.7) scale(1.000,1)" font-size="12.6" fill="#2c2c2c" text-anchor="middle" font-weight="700">Magenta</text>
<text transform="translate(847.0,989.7) scale(1.000,1)" font-size="12.6" fill="#2c2c2c" text-anchor="middle" font-weight="700">Cyan</text>
<text transform="translate(912.1,989.7) scale(1.000,1)" font-size="12.6" fill="#2c2c2c" text-anchor="middle" font-weight="700">100% Red</text>
<text transform="translate(958.9,975.0) scale(1.000,1)" font-size="12.6" fill="#2c2c2c" font-weight="700">100%</text>
<text transform="translate(958.9,989.7) scale(1.000,1)" font-size="12.6" fill="#2c2c2c" font-weight="700">Green</text>
<text transform="translate(1026.0,975.0) scale(1.000,1)" font-size="12.6" fill="#2c2c2c" font-weight="700">100%</text>
<text transform="translate(1026.0,989.7) scale(1.000,1)" font-size="12.6" fill="#2c2c2c" font-weight="700">Blue</text>
<text transform="translate(1091.0,975.0) scale(1.000,1)" font-size="12.6" fill="#2c2c2c" font-weight="700">100%</text>
<text transform="translate(1091.0,989.7) scale(1.000,1)" font-size="12.6" fill="#2c2c2c" font-weight="700">Cyan</text>
<text transform="translate(1146.6,975.0) scale(1.000,1)" font-size="12.6" fill="#2c2c2c" font-weight="700">100%</text>
<text transform="translate(1146.6,989.7) scale(1.000,1)" font-size="12.6" fill="#2c2c2c" font-weight="700">Magenta</text>
<text transform="translate(1217.6,975.0) scale(1.000,1)" font-size="12.6" fill="#fff" font-weight="700">100%</text>
<text transform="translate(1217.6,989.7) scale(1.000,1)" font-size="12.6" fill="#fff" font-weight="700">Yellow</text>
<path d="M8 1003l7-5v10z" fill="#333"/><path d="M1263 1003l-7-5v10z" fill="#333"/>
<circle cx="1299.3" cy="946.4" r="9.4" fill="url(#cbg)"/><path d="M1294.3 947.8l5-5.4 5 5.4z" fill="#333"/>
<circle cx="1359.2" cy="953.3" r="12.5" fill="url(#cbg)"/>
<circle cx="1416.5" cy="953.3" r="12.5" fill="url(#cbg)"/>
<circle cx="1472.8" cy="953.3" r="12.5" fill="url(#cbg)"/>
<circle cx="1529.2" cy="953.3" r="12.5" fill="url(#cbg)"/>
<circle cx="1585.6" cy="953.3" r="12.5" fill="#2a2a2a"/>
<circle cx="1643.3" cy="953.3" r="12.5" fill="url(#cbg)"/>
<rect x="1354.2" y="948.2" width="10" height="9.8" fill="#383838"/>
<path d="M1412.7 947.6v12l10.6-6z" fill="#383838"/>
<text transform="translate(1472.8,957.3) scale(1.000,1)" font-size="12.5" fill="#383838" text-anchor="middle" font-weight="700">[··]</text>
<text transform="translate(1529.2,958.5) scale(1.000,1)" font-size="18" fill="#383838" text-anchor="middle" font-weight="700">∞</text>
<path d="M1580.1 951a5.8 5.8 0 0 1 10 -1.8M1591.1 955.6a5.8 5.8 0 0 1 -10 1.8" fill="none" stroke="#1a1a1a" stroke-width="2.6"/><path d="M1592.1 946.5v5h-5zM1579.1 960v-5h5z" fill="#1a1a1a"/>
<circle cx="1369.3" cy="992.2" r="12" fill="url(#cbg)"/><circle cx="1636.2" cy="992.2" r="12" fill="url(#cbg)"/>
<path d="M1367.5 986l-5 6.2 5 6.2M1374 986l-5 6.2 5 6.2" fill="none" stroke="#3a3a3a" stroke-width="1.7"/>
<path d="M1631.5 986l5 6.2-5 6.2M1638 986l5 6.2-5 6.2" fill="none" stroke="#3a3a3a" stroke-width="1.7"/>
<text x="1403.2" y="1001.6" font-size="27" fill="#3e3e3e" textLength="61.6" lengthAdjust="spacingAndGlyphs" stroke="#3e3e3e" stroke-width="0.7">Back</text>
<text x="1536.4" y="1001.6" font-size="27" fill="#3e3e3e" textLength="63.9" lengthAdjust="spacingAndGlyphs" stroke="#3e3e3e" stroke-width="0.7">Next</text>
</svg>
</body></html>
